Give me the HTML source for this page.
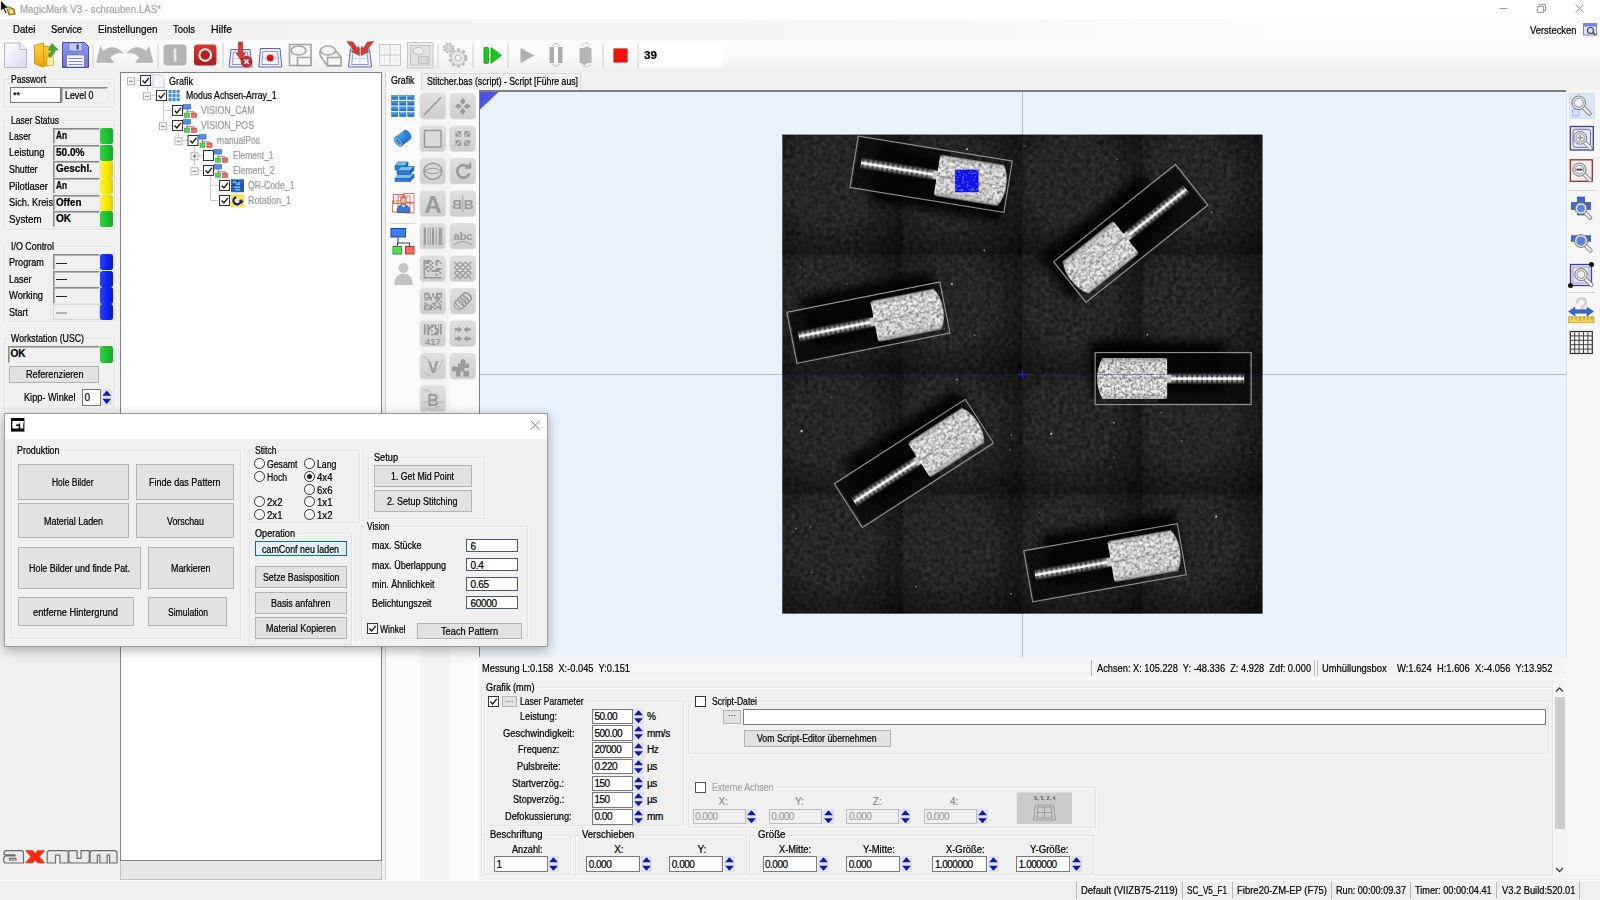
<!DOCTYPE html>
<html><head><meta charset="utf-8"><title>MagicMark V3</title>
<style>
html,body{margin:0;padding:0}
body{width:1600px;height:900px;overflow:hidden;background:#f0f0f0;font-family:"Liberation Sans",sans-serif;font-size:10.5px;color:#000;position:relative}
.a{position:absolute}
.t{position:absolute;white-space:pre;line-height:12px;font-size:10px;-webkit-text-stroke:0.22px currentColor}
.g{color:#9a9a9a}
.b{font-weight:bold}
.gb{position:absolute;border:1px solid #e2e2e2;box-shadow:1px 1px 0 #f8f8f8, inset 1px 1px 0 #f8f8f8;box-sizing:border-box}
.btn{position:absolute;box-sizing:border-box;background:#e2e2e2;border:1px solid #b4b4b4}
.inp{position:absolute;box-sizing:border-box;background:#fff;border:1px solid #7a7a7a}
.inpd{position:absolute;box-sizing:border-box;background:#f0f0f0;border:1px solid #bcbcbc}
.vb{position:absolute;box-sizing:border-box;background:#f0f0f0;border:1px solid #8a8a8a;border-right-color:#e8e8e8;border-bottom-color:#e8e8e8;box-shadow:inset 1px 1px 0 #b4b4b4}
.led{position:absolute;border-radius:2.5px}
.sep{position:absolute;width:1px;background:#c8c8c8}
.cb{position:absolute;box-sizing:border-box;width:11px;height:11px;border:1px solid #333;background:#fff}
.rd{position:absolute;box-sizing:border-box;width:11px;height:11px;margin:-0.5px 0 0 -0.5px;border:1px solid #333;border-radius:50%;background:#fff}
.sp{position:absolute;width:11px;height:16px;background:#dfe6f3}
</style></head>
<body>
<!-- ===== title bar ===== -->
<div class="a" id="titlebar" style="left:0;top:0;width:1600px;height:19px;background:#fff"></div>
<!-- ===== menu + toolbar bg ===== -->
<div class="a" id="menubar" style="left:0;top:19px;width:1600px;height:21px;background:linear-gradient(90deg,#f1f1f1,#f5f5f5 55%,#fdfdfd 82%)"></div>
<div class="a" id="toolbar" style="left:0;top:40px;width:1600px;height:32px;background:linear-gradient(#fcfcfc,#f9f9f9 55%,#eeeeee)"></div>


<!-- title content -->
<svg class="a" style="left:0;top:0" width="20" height="19" viewBox="0 0 20 19">
 <path d="M6,6 L14,9 L15,14 L9,15 Z" fill="#d9b43a" stroke="#7a6420" stroke-width="1"></path>
 <path d="M10,9.5 l2.5,1.2 l0.5,2.2 l-2.4,0.3z" fill="#fff6c8"></path>
 <path d="M0.5,0 L0.5,11.5 L3.2,9 L5.2,13.6 L7,12.8 L5,8.4 L8.6,8.2 Z" fill="#111" stroke="#fff" stroke-width="0.8"></path>
</svg>
<span class="t" style="left: 19.5px; top: 3.4px; font-size: 10.5px; line-height: 13px; color: rgb(164, 164, 164); transform-origin: 0px 50%; transform: scaleX(0.926);">MagicMark V3 - schrauben.LAS*</span>
<svg class="a" style="left:1490px;top:0" width="110" height="19" viewBox="1490 0 110 19" fill="none" stroke="#9a9a9a" stroke-width="1">
 <path d="M1499.5,8.5 h8"></path>
 <path d="M1537.5,6.5 h6 v6 h-6 z M1539.5,6.5 v-2 h6 v6 h-2"></path>
 <path d="M1575.5,4.5 l8,8 M1583.5,4.5 l-8,8"></path>
</svg>
<!-- menu -->
<span class="t" style="left: 12.5px; top: 23.1px; font-size: 10.8px; line-height: 13px; transform-origin: 0px 50%; transform: scaleX(0.892);">Datei</span>
<span class="t" style="left: 51px; top: 23.1px; font-size: 10.8px; line-height: 13px; transform-origin: 0px 50%; transform: scaleX(0.861);">Service</span>
<span class="t" style="left: 97.5px; top: 23.1px; font-size: 10.8px; line-height: 13px; transform-origin: 0px 50%; transform: scaleX(0.918);">Einstellungen</span>
<span class="t" style="left: 173px; top: 23.1px; font-size: 10.8px; line-height: 13px; transform-origin: 0px 50%; transform: scaleX(0.872);">Tools</span>
<span class="t" style="left: 211px; top: 23.1px; font-size: 10.8px; line-height: 13px; transform-origin: 0px 50%; transform: scaleX(0.972);">Hilfe</span>
<span class="t" style="left: 1530px; top: 23.9px; font-size: 10.8px; line-height: 13px; transform-origin: 0px 50%; transform: scaleX(0.87);">Verstecken</span>
<svg class="a" style="left:1583px;top:23px" width="15" height="13" viewBox="0 0 15 13">
 <rect x="0.5" y="0.5" width="13" height="11.5" fill="#dfe4f4" stroke="#7d86b8"></rect>
 <rect x="1" y="1" width="12" height="2.5" fill="#6d86d8"></rect>
 <circle cx="7.5" cy="7.5" r="3" fill="none" stroke="#445" stroke-width="1.2"></circle>
 <path d="M9.5,9.5 l3,2.5" stroke="#445" stroke-width="1.5"></path>
</svg>
<!-- toolbar icons -->
<svg class="a" style="left:0;top:38px" width="740" height="36" viewBox="0 38 740 36">
 <defs>
  <linearGradient id="gdoc" x1="0" y1="0" x2="1" y2="1"><stop offset="0" stop-color="#ffffff"></stop><stop offset="1" stop-color="#d8daee"></stop></linearGradient>
  <linearGradient id="gfol" x1="0" y1="0" x2="0" y2="1"><stop offset="0" stop-color="#ffd23a"></stop><stop offset="1" stop-color="#f0a010"></stop></linearGradient>
  <linearGradient id="gsav" x1="0" y1="0" x2="0" y2="1"><stop offset="0" stop-color="#8e98ee"></stop><stop offset="1" stop-color="#6a74d8"></stop></linearGradient>
  <linearGradient id="gred" x1="0" y1="0" x2="0" y2="1"><stop offset="0" stop-color="#d8392f"></stop><stop offset="1" stop-color="#a81c18"></stop></linearGradient>
 </defs>
 <!-- new doc -->
 <path d="M4.5,43 h15.5 l6.5,6.5 v18 h-22 z" fill="url(#gdoc)" stroke="#b4b6cc" stroke-width="1"></path>
 <path d="M20,43 v6.5 h6.5" fill="#eef" stroke="#b4b6cc" stroke-width="1"></path>
 <!-- open folder -->
 <path d="M34.5,45.5 l9,-2.5 l0,3 l8,1 v6 l-2,0 l2,11 l-9,3 l-8,-3.5 z" fill="url(#gfol)" stroke="#c8860c" stroke-width="0.8"></path>
 <path d="M43.5,46 v20.5" stroke="#d89a10" stroke-width="1"></path>
 <path d="M47,57 h6.5 v8.5 h-6.5z" fill="#f6e9a0" stroke="#c8a030" stroke-width="0.6"></path>
 <path d="M52,43.5 l6,6.5 h-3.2 c0,3 -1.5,5.5 -5,7 l-1.5,-2.5 c2.5,-1 3.6,-2.4 3.6,-4.5 h-3.4 z" fill="#3fae3a" stroke="#2a7a28" stroke-width="0.6"></path>
 <!-- save -->
 <path d="M62.5,42.5 h22 l4,4 v21 h-26 z" fill="url(#gsav)" stroke="#454cae" stroke-width="1"></path>
 <rect x="69" y="43" width="13" height="8" fill="#c9cdf4" stroke="#5860c0" stroke-width="0.6"></rect>
 <rect x="76.5" y="44.5" width="2.2" height="5" fill="#3c4088"></rect>
 <rect x="66.5" y="55" width="18" height="12" fill="#f4f5ff" stroke="#5860c0" stroke-width="0.6"></rect>
 <path d="M68.5,58.5 h14 M68.5,61.5 h14 M68.5,64.5 h14" stroke="#8088d0" stroke-width="1"></path>
 <rect x="92.5" y="43" width="1" height="25" fill="#d0d0d0"></rect>
 <!-- undo / redo -->
 <path d="M100.500,46.500 L96.500,62.500 L114,62.500 L110,57.500 Q115.500,51.500 122.800,53 Q113,43 103.200,51.200 Z" fill="#b7b7b7" stroke="#b0b0b0" stroke-width="0.600" stroke-linejoin="round"></path>
 <path d="M149,46.500 L153,62.500 L135.500,62.500 L139.500,57.500 Q134,51.500 126.700,53 Q136.500,43 146.300,51.200 Z" fill="#b7b7b7" stroke="#b0b0b0" stroke-width="0.600" stroke-linejoin="round"></path>
 <rect x="157.500" y="43" width="1" height="25" fill="#d0d0d0"></rect>
 <!-- gray I -->
 <rect x="163.500" y="44.500" width="23" height="21" rx="3.500" fill="#b4b4b4"></rect>
 <rect x="173.800" y="48.500" width="2.600" height="13" fill="#ececec"></rect>
 <!-- red O -->
 <rect x="194" y="44.500" width="22.500" height="21" rx="3.500" fill="url(#gred)"></rect>
 <circle cx="205.200" cy="55" r="5.800" fill="#b82220" stroke="#fff" stroke-width="2"></circle>
 <rect x="222.500" y="43" width="1" height="25" fill="#d0d0d0"></rect>
 <!-- mark w/ arrow + x -->
 <path d="M231,49.500 h19 l2,17.500 h-23 z" fill="#eef0fb" stroke="#5a62b8" stroke-width="1"></path>
 <path d="M233.500,52 h14 l1.300,12.500 h-16.600 z" fill="#f8f9ff" stroke="#7a82cc" stroke-width="0.8"></path>
 <path d="M232.500,58.500 h16" stroke="#e0a0a0" stroke-width="0.6"></path>
 <path d="M238.500,42 h4 v11 h3 l-4.500,7 l-5,-7 h2.500 z" fill="#d83a34" stroke="#a02020" stroke-width="0.6"></path>
 <circle cx="246.500" cy="61.500" r="5.500" fill="#cc2a26" stroke="#8a1a18" stroke-width="0.6"></circle>
 <path d="M244.300,59.300 l4.400,4.400 M248.700,59.300 l-4.400,4.400" stroke="#fff" stroke-width="1.600"></path>
 <!-- red dot -->
 <path d="M260.500,48.500 h19.500 l1.800,18.500 h-23 z" fill="#eef0fb" stroke="#5a62b8" stroke-width="1"></path>
 <path d="M263,51.500 h14.500 l1.300,13 h-17 z" fill="#f8f9ff" stroke="#7a82cc" stroke-width="0.8"></path>
 <path d="M261.500,58 h17.500" stroke="#e08080" stroke-width="0.6"></path>
 <circle cx="270.200" cy="58" r="3.400" fill="#e8100c"></circle>
 <!-- ellipse/rect grey -->
 <g fill="#f6f6f6" stroke="#a6a6a6" stroke-width="1.600">
 <rect x="289.500" y="44.500" width="21.500" height="21"></rect>
 <ellipse cx="298.500" cy="50.500" rx="7.500" ry="4.500"></ellipse>
 <rect x="297.500" y="57.500" width="13.500" height="8"></rect>
 <!-- 3d -->
 <path d="M327,47 h5 l9,10 v9 h-13.500 l-7,-10 c-2,-5 1,-9 6.500,-9 z"></path>
 <ellipse cx="328" cy="50.500" rx="7.500" ry="4.500"></ellipse>
 <rect x="327.500" y="57.500" width="13.500" height="8"></rect>
 </g>
 <!-- red V arrows -->
 <path d="M350.500,49 h19 l2,18 h-23 z" fill="#eef0fb" stroke="#5a62b8" stroke-width="1"></path>
 <path d="M353,52 h14 l1.300,12.500 h-16.600 z" fill="#f8f9ff" stroke="#7a82cc" stroke-width="0.8"></path>
 <path d="M360,52 v12.500 M352,58.500 h16" stroke="#b8bce0" stroke-width="0.6"></path>
 <path d="M347,41.500 l6,0.500 l4,6 l2,-1.500 l0.500,9 l-8,-4 l2,-1.500 z" fill="#d83a34" stroke="#a02020" stroke-width="0.5"></path>
 <path d="M373.500,41.500 l-6,0.500 l-4,6 l-2,-1.500 l-0.500,9 l8,-4 l-2,-1.500 z" fill="#d83a34" stroke="#a02020" stroke-width="0.5"></path>
 <!-- grid light -->
 <g fill="#f7f7f7" stroke="#c6c6c6" stroke-width="1">
 <rect x="379.500" y="44.500" width="21" height="21"></rect>
 <path d="M390,44.500 v21 M379.500,55 h21"></path>
 </g>
 <path d="M384.700,44.500 v21 M395.300,44.500 v21 M379.500,49.700 h21 M379.500,60.300 h21" stroke="#e2e2e2" stroke-width="0.6"></path>
 <!-- gray box w/ ellipse -->
 <rect x="407.500" y="42.500" width="25.500" height="25.500" fill="#e9e9e9" stroke="#c4c4c4"></rect>
 <rect x="410.500" y="45.500" width="19.500" height="19.500" fill="#e0e0e0" stroke="#c4c4c4"></rect>
 <ellipse cx="418.500" cy="51" rx="5.500" ry="3.500" fill="#ececec" stroke="#c0c0c0"></ellipse>
 <rect x="418.500" y="56.500" width="10" height="7" fill="#d4d4d4" stroke="#c0c0c0"></rect>
 <rect x="437.500" y="43" width="1" height="25" fill="#d0d0d0"></rect>
 <!-- gears -->
 <g fill="#e6e6e6" stroke="#bdbdbd" stroke-width="1">
 <circle cx="448.500" cy="48" r="4.300" stroke-width="2.600" stroke-dasharray="2.200 1.200" fill="none"></circle>
 <circle cx="448.500" cy="48" r="3.400"></circle>
 <circle cx="448.500" cy="48" r="1.300" fill="#fafafa"></circle>
 <circle cx="458" cy="58" r="8" stroke-width="3" stroke-dasharray="3.200 2" fill="none"></circle>
 <circle cx="458" cy="58" r="7"></circle>
 <circle cx="458" cy="58" r="2.800" fill="#fafafa"></circle>
 </g>
 <rect x="472.500" y="43" width="1" height="25" fill="#d0d0d0"></rect>
 <!-- green play -->
 <rect x="484" y="47.500" width="4.600" height="15.800" rx="0.800" fill="#19c81c" stroke="#0c8a10" stroke-width="0.800"></rect>
 <path d="M491,47.500 l10.300,7.900 l-10.300,7.900 z" fill="#19c81c" stroke="#0c8a10" stroke-width="0.800" stroke-linejoin="round"></path>
 <rect x="507.500" y="43" width="1" height="25" fill="#d0d0d0"></rect>
 <!-- gray play -->
 <path d="M520.500,48 l14,7.500 l-14,7.500 z" fill="#b0b0b0"></path>
 <!-- pause -->
 <rect x="549.500" y="47" width="4.500" height="16" fill="#acacac"></rect>
 <rect x="558" y="47" width="4.500" height="16" fill="#acacac"></rect>
 <path d="M552,46 l4,-3 l4,3 M552,64 l4,2.500 l4,-2.500" fill="none" stroke="#d4d4d4" stroke-width="1.500"></path>
 <!-- step -->
 <path d="M579.500,48 h4.500 l3,-2 l3,2 h1.500 v15 h-4 l-3,2.500 l-3,-2.500 h-2 z" fill="#b4b4b4"></path>
 <path d="M581,45.500 l5,-3 l5,3 M582,65 l4,2 l5,-2" fill="none" stroke="#d8d8d8" stroke-width="1.400"></path>
 <rect x="602.500" y="43" width="1" height="25" fill="#d0d0d0"></rect>
 <!-- stop -->
 <rect x="613.800" y="48.800" width="13.400" height="13.400" fill="#f5120c" stroke="#c02018" stroke-width="0.600"></rect>
 <rect x="637.500" y="43" width="1" height="25" fill="#d0d0d0"></rect>
 <rect x="640" y="43" width="83" height="24" fill="#fff"></rect>
</svg>
<span class="t b" style="left: 643.5px; top: 48.6px; font-size: 11.5px; line-height: 13px; transform-origin: 0px 50%; transform: scaleX(1.016);">39</span>

<!-- ===== left panel ===== -->
<div class="a" id="leftpanel" style="left:0;top:72px;width:120px;height:808px;background:#f0f0f0"></div>

<div class="gb" style="left:4px;top:79px;width:111px;height:29px"></div>
<span class="t" style="left: 9px; top: 74px; background: rgb(240, 240, 240); padding: 0px 2px; transform-origin: 2px 50%; transform: scaleX(0.851);">Passwort</span>
<div class="inp" style="left:10px;top:87px;width:51px;height:16px"></div><span class="t" style="left:13px;top:89.0px;font-size:9px">**</span>
<div class="vb" style="left:61px;top:87px;width:47px;height:16px"></div><span class="t" style="left: 64.5px; top: 90px; transform-origin: 0px 50%; transform: scaleX(0.884);">Level 0</span>
<div class="gb" style="left:4px;top:120px;width:111px;height:110px"></div>
<span class="t" style="left: 9px; top: 115px; background: rgb(240, 240, 240); padding: 0px 2px; transform-origin: 2px 50%; transform: scaleX(0.855);">Laser Status</span>
<span class="t" style="left: 9px; top: 130.9px; transform-origin: 0px 50%; transform: scaleX(0.879);">Laser</span>
<div class="vb" style="left:53px;top:128.1px;width:47px;height:16.4px"></div>
<span class="t b" style="left: 56px; top: 130.1px; transform-origin: 0px 50%; transform: scaleX(0.824);">An</span>
<div class="led" style="left:100px;top:128.1px;width:13px;height:16.4px;background:linear-gradient(90deg,#34cc44,#1fc030 50%,#15a826)"></div>
<span class="t" style="left: 9px; top: 147.4px; transform-origin: 0px 50%; transform: scaleX(0.939);">Leistung</span>
<div class="vb" style="left:53px;top:144.6px;width:47px;height:16.4px"></div>
<span class="t b" style="left: 56px; top: 146.6px; transform-origin: 0px 50%; transform: scaleX(1.005);">50.0%</span>
<div class="led" style="left:100px;top:144.6px;width:13px;height:16.4px;background:linear-gradient(90deg,#34cc44,#1fc030 50%,#15a826)"></div>
<span class="t" style="left: 9px; top: 164.1px; transform-origin: 0px 50%; transform: scaleX(0.884);">Shutter</span>
<div class="vb" style="left:53px;top:161.3px;width:47px;height:16.4px"></div>
<span class="t b" style="left: 56px; top: 163.3px; transform-origin: 0px 50%; transform: scaleX(0.996);">Geschl.</span>
<div class="led" style="left:100px;top:161.3px;width:13px;height:16.4px;background:linear-gradient(90deg,#fff24a,#f8e800 50%,#e2d000)"></div>
<span class="t" style="left: 9px; top: 180.7px; transform-origin: 0px 50%; transform: scaleX(0.948);">Pilotlaser</span>
<div class="vb" style="left:53px;top:177.9px;width:47px;height:16.4px"></div>
<span class="t b" style="left: 56px; top: 179.9px; transform-origin: 0px 50%; transform: scaleX(0.824);">An</span>
<div class="led" style="left:100px;top:177.9px;width:13px;height:16.4px;background:linear-gradient(90deg,#fff24a,#f8e800 50%,#e2d000)"></div>
<span class="t" style="left: 9px; top: 197.4px; transform-origin: 0px 50%; transform: scaleX(0.921);">Sich. Kreis</span>
<div class="vb" style="left:53px;top:194.6px;width:47px;height:16.4px"></div>
<span class="t b" style="left: 56px; top: 196.6px; transform-origin: 0px 50%; transform: scaleX(0.977);">Offen</span>
<div class="led" style="left:100px;top:194.6px;width:13px;height:16.4px;background:linear-gradient(90deg,#fff24a,#f8e800 50%,#e2d000)"></div>
<span class="t" style="left: 9px; top: 213.9px; transform-origin: 0px 50%; transform: scaleX(0.975);">System</span>
<div class="vb" style="left:53px;top:211.1px;width:47px;height:16.4px"></div>
<span class="t b" style="left: 56px; top: 213.1px; transform-origin: 0px 50%; transform: scaleX(1);">OK</span>
<div class="led" style="left:100px;top:211.1px;width:13px;height:16.4px;background:linear-gradient(90deg,#34cc44,#1fc030 50%,#15a826)"></div>
<div class="gb" style="left:4px;top:246px;width:111px;height:76px"></div>
<span class="t" style="left: 9px; top: 240.7px; background: rgb(240, 240, 240); padding: 0px 2px; transform-origin: 2px 50%; transform: scaleX(0.889);">I/O Control</span>
<span class="t" style="left: 9px; top: 257.2px; transform-origin: 0px 50%; transform: scaleX(0.912);">Program</span>
<div class="vb" style="left:53px;top:254.1px;width:47px;height:16.4px"></div>
<div class="a" style="left:56px;top:262.5px;width:11px;height:1.3px;background:#222"></div>
<div class="led" style="left:100px;top:254.1px;width:13px;height:16.4px;background:linear-gradient(90deg,#2c44ff,#1226ee 50%,#0a18cc)"></div>
<span class="t" style="left: 9px; top: 273.7px; transform-origin: 0px 50%; transform: scaleX(0.899);">Laser</span>
<div class="vb" style="left:53px;top:270.6px;width:47px;height:16.4px"></div>
<div class="a" style="left:56px;top:279.0px;width:11px;height:1.3px;background:#222"></div>
<div class="led" style="left:100px;top:270.6px;width:13px;height:16.4px;background:linear-gradient(90deg,#2c44ff,#1226ee 50%,#0a18cc)"></div>
<span class="t" style="left: 9px; top: 290.4px; transform-origin: 0px 50%; transform: scaleX(0.932);">Working</span>
<div class="vb" style="left:53px;top:287.3px;width:47px;height:16.4px"></div>
<div class="a" style="left:56px;top:295.7px;width:11px;height:1.3px;background:#222"></div>
<div class="led" style="left:100px;top:287.3px;width:13px;height:16.4px;background:linear-gradient(90deg,#2c44ff,#1226ee 50%,#0a18cc)"></div>
<span class="t" style="left: 9px; top: 307px; transform-origin: 0px 50%; transform: scaleX(0.899);">Start</span>
<div class="a" style="left:53px;top:303.9px;width:47px;height:16.4px;border:1px solid #d6d6d6;box-sizing:border-box"></div>
<div class="a" style="left:56px;top:312.3px;width:11px;height:1.3px;background:#b0b0b0"></div>
<div class="led" style="left:100px;top:303.9px;width:13px;height:16.4px;background:linear-gradient(90deg,#2c44ff,#1226ee 50%,#0a18cc)"></div>
<div class="gb" style="left:4px;top:338px;width:111px;height:72px"></div>
<span class="t" style="left: 9px; top: 333.4px; background: rgb(240, 240, 240); padding: 0px 2px; transform-origin: 2px 50%; transform: scaleX(0.878);">Workstation (USC)</span>
<div class="vb" style="left:8px;top:346px;width:92px;height:16.5px"></div><span class="t b" style="left: 10.5px; top: 348.2px; transform-origin: 0px 50%; transform: scaleX(1);">OK</span>
<div class="led" style="left:100px;top:346px;width:13px;height:16.5px;background:linear-gradient(90deg,#34cc44,#1fc030 50%,#15a826)"></div>
<div class="btn" style="left:9px;top:366px;width:90px;height:17px"></div><span class="t" style="left: 25.5px; top: 369.2px; transform-origin: 0px 50%; transform: scaleX(0.915);">Referenzieren</span>
<span class="t" style="left: 23.5px; top: 391.7px; transform-origin: 0px 50%; transform: scaleX(0.917);">Kipp- Winkel</span>
<div class="inp" style="left:82px;top:389px;width:19px;height:16.5px"></div><span class="t" style="left:84.5px;top:392.2px">0</span>
<svg class="a" style="left:101px;top:389px" width="11.500" height="16.500" viewBox="0 0 11.500 16.500"><rect width="11.500" height="16.500" fill="#dde3f0"></rect><path d="M5.750,1.500 l4.400,5.200 h-8.800z M5.750,15 l4.400,-5.200 h-8.800z" fill="#1414b4"></path></svg>
<svg class="a" style="left:0;top:845px" width="120" height="22" viewBox="0 845 120 22">
 <g fill="#e9e9e9" stroke="#6c6c6c" stroke-width="1.200" stroke-linejoin="round">
 <path d="M6.500,850.600 h14.500 q2.500,0 2.500,2.500 v9.900 h-17 q-2.800,0 -2.800,-2.800 v-1.400 q0,-2.800 2.800,-2.800 h8.500 v-1.200 h-11 v-1.700 q0,-2.500 2.500,-2.500 z M9.500,858.300 v1.700 h6.500 v-1.700 z" fill-rule="evenodd"></path>
 <path d="M47.200,863 v-9.900 q0,-2.500 2.500,-2.500 h16 q2.500,0 2.500,2.500 v9.900 h-8.300 v-7.800 h-4.400 v7.800 z"></path>
 <path d="M68.800,850.600 v9.900 q0,2.500 2.500,2.500 h15.500 q2.500,0 2.500,-2.500 v-9.900 h-8.300 v7.800 h-3.900 v-7.800 z"></path>
 <path d="M90,863 v-9.900 q0,-2.500 2.500,-2.500 h22 q2.500,0 2.500,2.500 v9.900 h-7.400 v-7.800 h-2.400 v7.800 h-7.400 v-7.800 h-2.400 v7.800 z"></path>
 </g>
 <path d="M25,850.300 h7.500 l2.600,2.800 l2.600,-2.800 h7.500 l-5.600,6.400 l5.600,6.500 h-7.500 l-2.600,-2.900 l-2.600,2.900 h-7.500 l5.600,-6.500 z" fill="#ff2a08"></path>
</svg>
<!-- ===== tree ===== -->
<div class="a" id="tree" style="left:120px;top:72px;width:262px;height:789px;background:#fff;border:1px solid #828282;box-sizing:border-box"></div>
<div class="a" style="left:120px;top:861px;width:262px;height:19px;background:#e6e6e6;border:1px solid #c0c0c0;border-top:none;box-sizing:border-box"></div>

<svg class="a" style="left:121px;top:73px" width="260" height="140" viewBox="121 73 260 140">
<g stroke="#cdcdcd" stroke-width="1" fill="none">
<path d="M135.5,80.5 h4 M147.500,85 v6 M151.500,95.500 h4 M163.500,100 v21 M163.500,110.500 h8 M167.500,125.500 h4 M178.500,130 v6 M182.500,140.500 h5 M194.500,145 v21 M198.500,155.500 h4 M198.500,170.500 h4 M210.500,175 v25.500 M210.500,185.500 h8 M210.500,200.500 h8"></path>
</g>
<rect x="127.5" y="77.75" width="7" height="7" fill="#fff" stroke="#b4b4b4" stroke-width="1"></rect>
<path d="M129.0,81.25 h4" stroke="#777" stroke-width="1"></path>
<rect x="140.5" y="75.50" width="10" height="10" fill="#fff" stroke="#333" stroke-width="1"></rect>
<path d="M142.6,80.55 l2.3,2.4 l4,-5" fill="none" stroke="#111" stroke-width="1.3"></path>
<path d="M153,74.75 h7.500 l3.500,3.500 v9.500 h-11 z" fill="#f4f4fb" stroke="#b8bacc" stroke-width="0.8"></path>
<rect x="143.5" y="92.75" width="7" height="7" fill="#fff" stroke="#b4b4b4" stroke-width="1"></rect>
<path d="M145.0,96.25 h4" stroke="#777" stroke-width="1"></path>
<rect x="156.5" y="90.50" width="10" height="10" fill="#fff" stroke="#333" stroke-width="1"></rect>
<path d="M158.6,95.55 l2.3,2.4 l4,-5" fill="none" stroke="#111" stroke-width="1.3"></path>
<rect x="168.5" y="90.05" width="3.2" height="3.2" fill="#3f8fe0"></rect>
<rect x="172.5" y="90.05" width="3.2" height="3.2" fill="#3f8fe0"></rect>
<rect x="176.5" y="90.05" width="3.2" height="3.2" fill="#3f8fe0"></rect>
<rect x="168.5" y="94.05" width="3.2" height="3.2" fill="#3f8fe0"></rect>
<rect x="172.5" y="94.05" width="3.2" height="3.2" fill="#3f8fe0"></rect>
<rect x="176.5" y="94.05" width="3.2" height="3.2" fill="#3f8fe0"></rect>
<rect x="168.5" y="98.05" width="3.2" height="3.2" fill="#3f8fe0"></rect>
<rect x="172.5" y="98.05" width="3.2" height="3.2" fill="#3f8fe0"></rect>
<rect x="176.5" y="98.05" width="3.2" height="3.2" fill="#3f8fe0"></rect>
<rect x="172.5" y="105.50" width="10" height="10" fill="#fff" stroke="#333" stroke-width="1"></rect>
<path d="M174.6,110.55 l2.3,2.4 l4,-5" fill="none" stroke="#111" stroke-width="1.3"></path>
<rect x="183.5" y="104.55" width="7" height="4.5" fill="#4f8ff0" stroke="#2a5ac0" stroke-width="0.6"></rect>
<path d="M187.0,109.25 v2.5 M187.0,113.25 v-1.500 h7 v1.500" fill="none" stroke="#555" stroke-width="0.7"></path>
<rect x="184.5" y="113.05" width="5" height="4.2" fill="#5fd060" stroke="#2a9a30" stroke-width="0.6"></rect>
<rect x="191.5" y="113.05" width="5" height="4.2" fill="#f07068" stroke="#c03028" stroke-width="0.6"></rect>
<rect x="159.5" y="122.75" width="7" height="7" fill="#fff" stroke="#b4b4b4" stroke-width="1"></rect>
<path d="M161.0,126.25 h4" stroke="#777" stroke-width="1"></path>
<rect x="172.5" y="120.50" width="10" height="10" fill="#fff" stroke="#333" stroke-width="1"></rect>
<path d="M174.6,125.55 l2.3,2.4 l4,-5" fill="none" stroke="#111" stroke-width="1.3"></path>
<rect x="183.5" y="119.55" width="7" height="4.5" fill="#4f8ff0" stroke="#2a5ac0" stroke-width="0.6"></rect>
<path d="M187.0,124.25 v2.5 M187.0,128.25 v-1.500 h7 v1.500" fill="none" stroke="#555" stroke-width="0.7"></path>
<rect x="184.5" y="128.05" width="5" height="4.2" fill="#5fd060" stroke="#2a9a30" stroke-width="0.6"></rect>
<rect x="191.5" y="128.05" width="5" height="4.2" fill="#f07068" stroke="#c03028" stroke-width="0.6"></rect>
<rect x="175.0" y="137.75" width="7" height="7" fill="#fff" stroke="#b4b4b4" stroke-width="1"></rect>
<path d="M176.5,141.25 h4" stroke="#777" stroke-width="1"></path>
<rect x="188.0" y="135.50" width="10" height="10" fill="#fff" stroke="#333" stroke-width="1"></rect>
<path d="M190.1,140.55 l2.3,2.4 l4,-5" fill="none" stroke="#111" stroke-width="1.3"></path>
<rect x="199.0" y="134.55" width="7" height="4.5" fill="#4f8ff0" stroke="#2a5ac0" stroke-width="0.6"></rect>
<path d="M202.5,139.25 v2.5 M202.5,143.25 v-1.500 h7 v1.500" fill="none" stroke="#555" stroke-width="0.7"></path>
<rect x="200.0" y="143.05" width="5" height="4.2" fill="#5fd060" stroke="#2a9a30" stroke-width="0.6"></rect>
<rect x="207.0" y="143.05" width="5" height="4.2" fill="#f07068" stroke="#c03028" stroke-width="0.6"></rect>
<rect x="191.0" y="152.75" width="7" height="7" fill="#fff" stroke="#b4b4b4" stroke-width="1"></rect>
<path d="M192.5,156.25 h4" stroke="#777" stroke-width="1"></path>
<path d="M194.5,154.25 v4" stroke="#777" stroke-width="1"></path>
<rect x="203.5" y="150.50" width="10" height="10" fill="#fff" stroke="#333" stroke-width="1"></rect>
<rect x="214.5" y="149.55" width="7" height="4.5" fill="#4f8ff0" stroke="#2a5ac0" stroke-width="0.6"></rect>
<path d="M218.0,154.25 v2.5 M218.0,158.25 v-1.500 h7 v1.500" fill="none" stroke="#555" stroke-width="0.7"></path>
<rect x="215.5" y="158.05" width="5" height="4.2" fill="#5fd060" stroke="#2a9a30" stroke-width="0.6"></rect>
<rect x="222.5" y="158.05" width="5" height="4.2" fill="#f07068" stroke="#c03028" stroke-width="0.6"></rect>
<rect x="191.0" y="167.75" width="7" height="7" fill="#fff" stroke="#b4b4b4" stroke-width="1"></rect>
<path d="M192.5,171.25 h4" stroke="#777" stroke-width="1"></path>
<rect x="203.5" y="165.50" width="10" height="10" fill="#fff" stroke="#333" stroke-width="1"></rect>
<path d="M205.6,170.55 l2.3,2.4 l4,-5" fill="none" stroke="#111" stroke-width="1.3"></path>
<rect x="214.5" y="164.55" width="7" height="4.5" fill="#4f8ff0" stroke="#2a5ac0" stroke-width="0.6"></rect>
<path d="M218.0,169.25 v2.5 M218.0,173.25 v-1.500 h7 v1.500" fill="none" stroke="#555" stroke-width="0.7"></path>
<rect x="215.5" y="173.05" width="5" height="4.2" fill="#5fd060" stroke="#2a9a30" stroke-width="0.6"></rect>
<rect x="222.5" y="173.05" width="5" height="4.2" fill="#f07068" stroke="#c03028" stroke-width="0.6"></rect>
<rect x="219.5" y="180.50" width="10" height="10" fill="#fff" stroke="#333" stroke-width="1"></rect>
<path d="M221.6,185.55 l2.3,2.4 l4,-5" fill="none" stroke="#111" stroke-width="1.3"></path>
<rect x="231.0" y="179.25" width="13" height="13" fill="#2c60b8"></rect>
<path d="M233.0,182.25 h4 v2 h3 M234.0,187.25 h6 M239.0,181.75 v3 M235.0,189.75 h5" stroke="#6fc0f0" stroke-width="1.3" fill="none"></path>
<path d="M232.5,185.25 h3 M240.0,185.75 h3 M237.0,180.75 v2" stroke="#1a3a80" stroke-width="1.2" fill="none"></path>
<rect x="219.5" y="195.50" width="10" height="10" fill="#fff" stroke="#333" stroke-width="1"></rect>
<path d="M221.6,200.55 l2.3,2.4 l4,-5" fill="none" stroke="#111" stroke-width="1.3"></path>
<rect x="231.0" y="194.25" width="13" height="13" fill="#ffe23a"></rect>
<circle cx="237.0" cy="200.75" r="3.6" fill="#ffe9a0" stroke="#1c1c8c" stroke-width="2.2" stroke-dasharray="17 6" transform="rotate(-20 237.0 200.75)"></circle>
<path d="M239.5,200.25 l4.500,0.500 l-3,3.500 z" fill="#1c1c8c"></path>
</svg>
<span class="t" style="left: 169px; top: 75.6px; transform-origin: 0px 50%; transform: scaleX(0.9);">Grafik</span>
<span class="t" style="left: 185.5px; top: 90.4px; transform-origin: 0px 50%; transform: scaleX(0.871);">Modus Achsen-Array_1</span>
<span class="t g" style="left: 201px; top: 105.4px; transform-origin: 0px 50%; transform: scaleX(0.867);">VISION_CAM</span>
<span class="t g" style="left: 201px; top: 120.4px; transform-origin: 0px 50%; transform: scaleX(0.875);">VISION_POS</span>
<span class="t g" style="left: 216.5px; top: 135.4px; transform-origin: 0px 50%; transform: scaleX(0.859);">manualPos</span>
<span class="t g" style="left: 233px; top: 150.4px; transform-origin: 0px 50%; transform: scaleX(0.847);">Element_1</span>
<span class="t g" style="left: 233px; top: 165.4px; transform-origin: 0px 50%; transform: scaleX(0.868);">Element_2</span>
<span class="t g" style="left: 248px; top: 180.4px; transform-origin: 0px 50%; transform: scaleX(0.871);">QR-Code_1</span>
<span class="t g" style="left: 248px; top: 195.4px; transform-origin: 0px 50%; transform: scaleX(0.889);">Rotation_1</span>
<div class="a" style="left:385px;top:72px;width:94px;height:808px;background:linear-gradient(90deg,#fcfcfc 0,#fcfcfc 33px,#f3f3f3 36px,#f3f3f3 62px,#f9f9f9 66px,#fbfbfb 100%);border-left:1px solid #d4d4d4;box-sizing:border-box"></div>
<div class="a" style="left:387px;top:90px;width:31px;height:322px;background:#fafafa"></div>
<div class="a" style="left:386px;top:72px;width:33px;height:19px;background:#fafafa"></div>
<span class="t" style="left: 391px; top: 74.7px; transform-origin: 0px 50%; transform: scaleX(0.881);">Grafik</span>
<div class="a" style="left:421px;top:73px;width:160px;height:17px;background:#f1f1f1;border:1px solid #d9d9d9;border-bottom:none;box-sizing:border-box"></div>
<span class="t" style="left: 427px; top: 75.7px; transform-origin: 0px 50%; transform: scaleX(0.871);">Stitcher.bas (script) - Script [Führe aus]</span>
<svg class="a" style="left:386px;top:90px" width="94" height="325" viewBox="386 90 94 325">
<defs><linearGradient id="gbtn" x1="0" y1="0" x2="0" y2="1"><stop offset="0" stop-color="#dfdfdf"></stop><stop offset="1" stop-color="#cecece"></stop></linearGradient><linearGradient id="gblu" x1="0" y1="0" x2="0" y2="1"><stop offset="0" stop-color="#4aa8f0"></stop><stop offset="1" stop-color="#1868c8"></stop></linearGradient></defs>
<rect x="420" y="93.5" width="25.500" height="25.500" rx="3.500" fill="url(#gbtn)" stroke="#dcdcdc" stroke-width="0.800"></rect>
<rect x="450" y="93.5" width="25.500" height="25.500" rx="3.500" fill="url(#gbtn)" stroke="#dcdcdc" stroke-width="0.800"></rect>
<rect x="420" y="126" width="25.500" height="25.500" rx="3.500" fill="url(#gbtn)" stroke="#dcdcdc" stroke-width="0.800"></rect>
<rect x="450" y="126" width="25.500" height="25.500" rx="3.500" fill="url(#gbtn)" stroke="#dcdcdc" stroke-width="0.800"></rect>
<rect x="420" y="158.5" width="25.500" height="25.500" rx="3.500" fill="url(#gbtn)" stroke="#dcdcdc" stroke-width="0.800"></rect>
<rect x="450" y="158.5" width="25.500" height="25.500" rx="3.500" fill="url(#gbtn)" stroke="#dcdcdc" stroke-width="0.800"></rect>
<rect x="420" y="191" width="25.500" height="25.500" rx="3.500" fill="url(#gbtn)" stroke="#dcdcdc" stroke-width="0.800"></rect>
<rect x="450" y="191" width="25.500" height="25.500" rx="3.500" fill="url(#gbtn)" stroke="#dcdcdc" stroke-width="0.800"></rect>
<rect x="420" y="223.5" width="25.500" height="25.500" rx="3.500" fill="url(#gbtn)" stroke="#dcdcdc" stroke-width="0.800"></rect>
<rect x="450" y="223.5" width="25.500" height="25.500" rx="3.500" fill="url(#gbtn)" stroke="#dcdcdc" stroke-width="0.800"></rect>
<rect x="420" y="256" width="25.500" height="25.500" rx="3.500" fill="url(#gbtn)" stroke="#dcdcdc" stroke-width="0.800"></rect>
<rect x="450" y="256" width="25.500" height="25.500" rx="3.500" fill="url(#gbtn)" stroke="#dcdcdc" stroke-width="0.800"></rect>
<rect x="420" y="288.5" width="25.500" height="25.500" rx="3.500" fill="url(#gbtn)" stroke="#dcdcdc" stroke-width="0.800"></rect>
<rect x="450" y="288.5" width="25.500" height="25.500" rx="3.500" fill="url(#gbtn)" stroke="#dcdcdc" stroke-width="0.800"></rect>
<rect x="420" y="321" width="25.500" height="25.500" rx="3.500" fill="url(#gbtn)" stroke="#dcdcdc" stroke-width="0.800"></rect>
<rect x="450" y="321" width="25.500" height="25.500" rx="3.500" fill="url(#gbtn)" stroke="#dcdcdc" stroke-width="0.800"></rect>
<rect x="420" y="353.5" width="25.500" height="25.500" rx="3.500" fill="url(#gbtn)" stroke="#dcdcdc" stroke-width="0.800"></rect>
<rect x="450" y="353.5" width="25.500" height="25.500" rx="3.500" fill="url(#gbtn)" stroke="#dcdcdc" stroke-width="0.800"></rect>
<rect x="420" y="386" width="25.500" height="25.500" rx="3.500" fill="url(#gbtn)" stroke="#dcdcdc" stroke-width="0.800"></rect>
<path d="M424,115 L441,97.500" stroke="#9a9a9a" stroke-width="1.500"></path>
<path d="M462.800,97.800 l2.800,3.600 l-2.800,3.600 l-2.800,-3.600z M462.800,107.800 l2.800,3.600 l-2.800,3.600 l-2.800,-3.600z M454.800,106.300 l3.600,-2.800 l3.600,2.800 l-3.600,2.800z M463.600,106.300 l3.600,-2.800 l3.600,2.800 l-3.600,2.800z" fill="#9a9a9a"></path>
<rect x="424.500" y="130.500" width="16.500" height="16.500" fill="#dadada" stroke="#9a9a9a" stroke-width="1.500"></rect>
<path d="M455.500,131 h5.800 v5.800 h-5.800z M464.300,131 h5.800 v5.800 h-5.800z M455.500,140.200 h5.800 v5.800 h-5.800z M464.300,140.200 h5.800 v5.800 h-5.800z" fill="#9a9a9a"></path><path d="M456,131.500 l4.800,4.800 M464.800,136.300 l4.800,-4.800 M456,145.500 l4.800,-4.800 M464.800,140.700 l4.800,4.800" stroke="#d2d2d2" stroke-width="1.100"></path>
<ellipse cx="432.800" cy="171.200" rx="9" ry="8" fill="#d8d8d8" stroke="#9a9a9a" stroke-width="1.400"></ellipse><path d="M424,171 q9,-5.500 17.500,0 M424,171 q9,5.500 17.500,0" fill="none" stroke="#9a9a9a" stroke-width="1"></path>
<path d="M467.800,166.800 a6.300,6.300 0 1 0 1.600,6.600" fill="none" stroke="#9a9a9a" stroke-width="2.800"></path><path d="M464,168.800 h7.200 v-7.200 z" fill="#9a9a9a"></path>
<text x="432.800" y="213" font-family="Liberation Sans" font-weight="bold" font-size="24" text-anchor="middle" fill="#9a9a9a">A</text>
<g font-family="Liberation Sans" font-weight="bold" font-size="13.500" fill="#9a9a9a"><text x="463.800" y="208.500">B</text><text x="-461.800" y="208.500" transform="scale(-1 1)">B</text></g><path d="M462.800,195 v17.500" stroke="#9a9a9a" stroke-width="0.900"></path>
<path d="M424.800,227.500 v17.500 M433,227.500 v17.500 M439.800,227.500 v17.500" stroke="#9a9a9a" stroke-width="2.200"></path><path d="M428,227.500 v17.500 M430.300,227.500 v17.500 M436.200,227.500 v17.500 M441.800,227.500 v17.500" stroke="#9a9a9a" stroke-width="1"></path>
<text x="462.800" y="239.500" font-family="Liberation Sans" font-weight="bold" font-size="11.500" text-anchor="middle" fill="#9a9a9a" letter-spacing="-0.300">abc</text><path d="M454,245 q9,-7 18,0" stroke="#9a9a9a" stroke-width="1.200" fill="none"></path>
<path d="M425.5,260.0h2v2h-2zM427.5,260.0h2v2h-2zM429.5,260.0h2v2h-2zM435.5,260.0h2v2h-2zM437.5,260.0h2v2h-2zM425.5,262.0h2v2h-2zM427.5,262.0h2v2h-2zM431.5,262.0h2v2h-2zM435.5,262.0h2v2h-2zM439.5,262.0h2v2h-2zM429.5,264.0h2v2h-2zM435.5,264.0h2v2h-2zM425.5,266.0h2v2h-2zM427.5,266.0h2v2h-2zM431.5,266.0h2v2h-2zM425.5,268.0h2v2h-2zM429.5,268.0h2v2h-2zM435.5,268.0h2v2h-2zM437.5,268.0h2v2h-2zM439.5,268.0h2v2h-2zM427.5,270.0h2v2h-2zM431.5,270.0h2v2h-2zM433.5,270.0h2v2h-2zM435.5,270.0h2v2h-2zM437.5,270.0h2v2h-2zM439.5,272.0h2v2h-2zM435.5,274.0h2v2h-2z" fill="#9a9a9a"></path><path d="M424.300,259.500 v18.200 h17.700" stroke="#9a9a9a" stroke-width="1.600" fill="none"></path>
<g stroke="#9a9a9a" stroke-width="1.100" stroke-linecap="square"><path d="M454.500,262 l16.500,16.500 M454.500,267.500 l11,11 M454.500,273 l5.500,5.500 M460,262 l11,11 M465.500,262 l5.500,5.500 M471,262 l-16.500,16.500 M465.500,262 l-11,11 M460,262 l-5.500,5.500 M471,267.500 l-11,11 M471,273 l-5.500,5.500"></path></g>
<path d="M424.5,293.0h1.9v1.9h-1.9zM426.4,293.0h1.9v1.9h-1.9zM432.1,293.0h1.9v1.9h-1.9zM435.9,293.0h1.9v1.9h-1.9zM437.8,293.0h1.9v1.9h-1.9zM439.7,293.0h1.9v1.9h-1.9zM428.3,294.9h1.9v1.9h-1.9zM432.1,294.9h1.9v1.9h-1.9zM435.9,294.9h1.9v1.9h-1.9zM428.3,296.8h1.9v1.9h-1.9zM430.2,296.8h1.9v1.9h-1.9zM434.0,296.8h1.9v1.9h-1.9zM435.9,296.8h1.9v1.9h-1.9zM437.8,296.8h1.9v1.9h-1.9zM424.5,298.7h1.9v1.9h-1.9zM426.4,298.7h1.9v1.9h-1.9zM430.2,298.7h1.9v1.9h-1.9zM435.9,298.7h1.9v1.9h-1.9zM437.8,298.7h1.9v1.9h-1.9zM435.9,300.6h1.9v1.9h-1.9zM439.7,300.6h1.9v1.9h-1.9zM424.5,302.5h1.9v1.9h-1.9zM432.1,302.5h1.9v1.9h-1.9zM434.0,302.5h1.9v1.9h-1.9zM437.8,302.5h1.9v1.9h-1.9zM426.4,304.4h1.9v1.9h-1.9zM430.2,304.4h1.9v1.9h-1.9zM434.0,304.4h1.9v1.9h-1.9zM439.7,304.4h1.9v1.9h-1.9zM424.5,306.3h1.9v1.9h-1.9zM430.2,306.3h1.9v1.9h-1.9zM432.1,306.3h1.9v1.9h-1.9zM435.9,306.3h1.9v1.9h-1.9zM437.8,306.3h1.9v1.9h-1.9zM439.7,306.3h1.9v1.9h-1.9zM424.5,308.2h1.9v1.9h-1.9zM428.3,308.2h1.9v1.9h-1.9zM430.2,308.2h1.9v1.9h-1.9zM434.0,308.2h1.9v1.9h-1.9zM439.7,308.2h1.9v1.9h-1.9z" fill="#9a9a9a"></path><g fill="none" stroke="#9a9a9a" stroke-width="1.200"><rect x="424.800" y="293.300" width="4.400" height="4.400"></rect><rect x="436.800" y="293.300" width="4.400" height="4.400"></rect><rect x="424.800" y="305.300" width="4.400" height="4.400"></rect></g>
<g transform="rotate(-45 462.800 301.200)" fill="none" stroke="#9a9a9a" stroke-width="1.200"><rect x="453" y="296.200" width="19.500" height="10" rx="5" fill="#dadada"></rect><ellipse cx="458.500" cy="301.200" rx="2.600" ry="5"></ellipse><ellipse cx="462" cy="301.200" rx="2.600" ry="5"></ellipse><ellipse cx="465.500" cy="301.200" rx="2.600" ry="5"></ellipse><ellipse cx="469" cy="301.200" rx="2.600" ry="5"></ellipse></g>
<path d="M427.5,324.5h1.8v1.8h-1.8zM431.1,324.5h1.8v1.8h-1.8zM432.9,324.5h1.8v1.8h-1.8zM434.7,324.5h1.8v1.8h-1.8zM427.5,326.3h1.8v1.8h-1.8zM429.3,326.3h1.8v1.8h-1.8zM431.1,326.3h1.8v1.8h-1.8zM434.7,326.3h1.8v1.8h-1.8zM427.5,328.1h1.8v1.8h-1.8zM429.3,328.1h1.8v1.8h-1.8zM434.7,328.1h1.8v1.8h-1.8zM436.5,328.1h1.8v1.8h-1.8zM427.5,329.9h1.8v1.8h-1.8zM431.1,329.9h1.8v1.8h-1.8zM436.5,329.9h1.8v1.8h-1.8zM427.5,331.7h1.8v1.8h-1.8zM434.7,331.7h1.8v1.8h-1.8zM436.5,331.7h1.8v1.8h-1.8zM427.5,333.5h1.8v1.8h-1.8zM431.1,333.5h1.8v1.8h-1.8zM432.9,333.5h1.8v1.8h-1.8zM434.7,333.5h1.8v1.8h-1.8zM436.5,333.5h1.8v1.8h-1.8z" fill="#9a9a9a"></path><path d="M424.800,324 v10.500 M440.800,324 v10.500" stroke="#9a9a9a" stroke-width="1.800"></path><path d="M427.200,324 v10.500 M438.600,324 v10.500" stroke="#9a9a9a" stroke-width="0.800"></path>
<text x="432.800" y="344.800" font-family="Liberation Sans" font-weight="bold" font-size="9.500" text-anchor="middle" fill="#9a9a9a">417</text>
<path d="M462,329.500 l-3.800,-3.200 v2 h-3.400 v2.400 h3.400 v2z M463.600,329.500 l3.800,-3.200 v2 h3.400 v2.400 h-3.400 v2z M462,338.800 l-3.800,-3.200 v2 h-3.400 v2.400 h3.400 v2z M463.600,338.800 l3.800,-3.200 v2 h3.400 v2.400 h-3.400 v2z" fill="#9a9a9a"></path>
<text x="433" y="372.500" font-family="Liberation Sans" font-weight="bold" font-size="16" text-anchor="middle" fill="#9a9a9a">V</text><path d="M423,357 q5,0 7,6 M443,360 q-3,8 -9,13 M424,372 q3,3 6,4" stroke="#b4b4b4" stroke-width="0.900" fill="none"></path>
<path d="M458,363.500 h3 a2.600,2.600 0 1 1 4,0 h4 v4.500 h-4.500 v3 h4.500 v5.500 h-5.500 v-5 h-3 v5 h-4.500 v-5.500 a2.600,2.600 0 1 1 0,-4 h2 z" fill="#9a9a9a"></path>
<text x="433" y="405.500" font-family="Liberation Sans" font-weight="bold" font-size="16" text-anchor="middle" fill="#9a9a9a">B</text><path d="M423,390 q6,-1 9,4 M422,402 h22 M426,408 q6,3 14,-2" stroke="#b4b4b4" stroke-width="0.900" fill="none"></path>
<rect x="391.5" y="95.5" width="6.400" height="4" fill="url(#gblu)" stroke="#1458a8" stroke-width="0.400"></rect>
<rect x="399.6" y="95.5" width="6.400" height="4" fill="url(#gblu)" stroke="#1458a8" stroke-width="0.400"></rect>
<rect x="407.7" y="95.5" width="6.400" height="4" fill="url(#gblu)" stroke="#1458a8" stroke-width="0.400"></rect>
<rect x="391.5" y="101.2" width="6.400" height="4" fill="url(#gblu)" stroke="#1458a8" stroke-width="0.400"></rect>
<rect x="399.6" y="101.2" width="6.400" height="4" fill="url(#gblu)" stroke="#1458a8" stroke-width="0.400"></rect>
<rect x="407.7" y="101.2" width="6.400" height="4" fill="url(#gblu)" stroke="#1458a8" stroke-width="0.400"></rect>
<rect x="391.5" y="106.9" width="6.400" height="4" fill="url(#gblu)" stroke="#1458a8" stroke-width="0.400"></rect>
<rect x="399.6" y="106.9" width="6.400" height="4" fill="url(#gblu)" stroke="#1458a8" stroke-width="0.400"></rect>
<rect x="407.7" y="106.9" width="6.400" height="4" fill="url(#gblu)" stroke="#1458a8" stroke-width="0.400"></rect>
<rect x="391.5" y="112.6" width="6.400" height="4" fill="url(#gblu)" stroke="#1458a8" stroke-width="0.400"></rect>
<rect x="399.6" y="112.6" width="6.400" height="4" fill="url(#gblu)" stroke="#1458a8" stroke-width="0.400"></rect>
<rect x="407.7" y="112.6" width="6.400" height="4" fill="url(#gblu)" stroke="#1458a8" stroke-width="0.400"></rect>
<g transform="translate(403 138) scale(0.74) translate(-403 -138) rotate(-38 403 138)"><rect x="395" y="130.500" width="16" height="15" fill="url(#gblu)"></rect><ellipse cx="411" cy="138" rx="3.500" ry="7.500" fill="#2c7cd8"></ellipse><ellipse cx="395" cy="138" rx="4" ry="7.500" fill="#7ac0f4" stroke="#1458a8" stroke-width="0.800"></ellipse><ellipse cx="395" cy="138" rx="2" ry="4" fill="#3f90e0" stroke="#1458a8" stroke-width="0.600"></ellipse></g>
<g stroke="#1458a8" stroke-width="0.600"><path d="M398,162 h10 l-3,4 h-10z" fill="#7ac0f4"></path><path d="M395,166 h10 v4 h-10z" fill="#2c7cd8"></path><path d="M405,166 l3,-4 v4 l-3,4z" fill="#1868c8"></path><path d="M401,166.500 h13 l-4,4.500 h-13z" fill="#7ac0f4"></path><path d="M397,171 h13 v3.500 h-13z" fill="#2c7cd8"></path><path d="M410,171 l4,-4.500 v3.500 l-4,4.500z" fill="#1868c8"></path><path d="M399,174.500 h15 l-4,4 h-15z" fill="#7ac0f4"></path><path d="M395,178.500 h15 v3 h-15z" fill="#2c7cd8"></path><path d="M410,178.500 l4,-4 v3 l-4,4z" fill="#1868c8"></path></g>
<g fill="none" stroke="#e05048" stroke-width="0.800"><rect x="393.500" y="194.500" width="10" height="9"></rect><rect x="404" y="193.500" width="10" height="9"></rect><rect x="392.500" y="201" width="9" height="11"></rect><rect x="405" y="203" width="9" height="10"></rect><rect x="398" y="196" width="12" height="16"></rect></g>
<circle cx="403.500" cy="200.500" r="3.200" fill="#f0b088" stroke="#804020" stroke-width="0.500"></circle><path d="M400,199 q3.500,-4 7,0 l-1,-2.500 h-5z" fill="#d06020"></path><path d="M397,212.500 q0,-8 6.500,-8 q6.500,0 6.500,8z" fill="#3c78d8" stroke="#1c3c88" stroke-width="0.600"></path><path d="M401.500,205 l2,2.500 l2,-2.500z" fill="#fff"></path>
<path d="M391,223.500 h24" stroke="#d6d6d6" stroke-width="1"></path>
<rect x="391" y="228.500" width="14.500" height="8.500" fill="#3c7cf0" stroke="#1c44b8" stroke-width="1"></rect><path d="M398,237.500 v5.500 M397.500,243 h12 v3.500 M397.500,243 v3.500" fill="none" stroke="#3a3a6a" stroke-width="1.100"></path>
<rect x="393" y="246.500" width="8.500" height="7.500" fill="#58dc58" stroke="#2a9a30" stroke-width="1"></rect><rect x="405.500" y="246.500" width="8.500" height="7.500" fill="#fa6a5c" stroke="#c03028" stroke-width="1"></rect>
<circle cx="403.500" cy="268" r="4.600" fill="#c6c6c6" stroke="#b0b0b0" stroke-width="0.600"></circle><path d="M394.500,284.500 q0.500,-10.500 9,-10.500 q8.500,0 9,10.500z" fill="#c2c2c2" stroke="#b0b0b0" stroke-width="0.600"></path>
</svg>
<!-- ===== canvas ===== -->
<div class="a" id="canvas" style="left:479px;top:90px;width:1087px;height:567px;background:#e9f3fd;border-top:2px solid #7e7e7e;border-left:1px solid #7e7e7e;box-sizing:border-box"></div>

<svg class="a" style="left:480px;top:92px" width="1086" height="565" viewBox="480 92 1086 565">
<defs>
<filter id="fbg" x="0" y="0" width="100%" height="100%"><feTurbulence type="fractalNoise" baseFrequency="0.22" numOctaves="3" seed="7" result="n"></feTurbulence><feColorMatrix in="n" type="matrix" values="0 0 0 0 0  0 0 0 0 0  0 0 0 0 0  1.3 1.3 0 0 -0.85" result="a"></feColorMatrix><feFlood flood-color="#626262"></feFlood><feComposite in2="a" operator="in"></feComposite></filter>
<filter id="fbody" x="0" y="0" width="100%" height="100%"><feTurbulence type="fractalNoise" baseFrequency="0.35" numOctaves="3" seed="11" result="n"></feTurbulence><feColorMatrix in="n" type="matrix" values="0 0 0 0 0  0 0 0 0 0  0 0 0 0 0  1.5 1.5 0 0 -1.2" result="a"></feColorMatrix><feFlood flood-color="#707070"></feFlood><feComposite in2="a" operator="in"></feComposite><feComposite in2="SourceGraphic" operator="in"></feComposite></filter>
<filter id="fblur" x="-20%" y="-20%" width="140%" height="140%"><feGaussianBlur stdDeviation="5"></feGaussianBlur></filter>
<filter id="fblur1" x="-10%" y="-10%" width="120%" height="120%"><feGaussianBlur stdDeviation="0.6"></feGaussianBlur></filter>
<radialGradient id="gvig" cx="0.4" cy="0.4" r="0.85"><stop offset="0.4" stop-color="#000" stop-opacity="0"></stop><stop offset="1" stop-color="#000" stop-opacity="0.7"></stop></radialGradient>
<linearGradient id="gshaft" x1="0" y1="0" x2="0" y2="1"><stop offset="0" stop-color="#1c1c1c"></stop><stop offset="0.3" stop-color="#8a8a8a"></stop><stop offset="0.5" stop-color="#e8e8e8"></stop><stop offset="0.7" stop-color="#8a8a8a"></stop><stop offset="1" stop-color="#1a1a1a"></stop></linearGradient>
<linearGradient id="gbody" x1="0" y1="0" x2="0" y2="1"><stop offset="0" stop-color="#c0c0c0"></stop><stop offset="0.15" stop-color="#f2f2f2"></stop><stop offset="0.85" stop-color="#ececec"></stop><stop offset="1" stop-color="#b0b0b0"></stop></linearGradient>
<g id="screw">
 <rect x="-76" y="-24.500" width="92" height="49" fill="#050505" opacity="0.72"></rect>
 <g filter="url(#fblur1)">
 <rect x="-71" y="-5.500" width="78" height="11" fill="url(#gshaft)"></rect>
 <path d="M-69,-6 v12 M-64,-6 v12 M-59,-6 v12 M-54,-6 v12 M-49,-6 v12 M-44,-6 v12 M-39,-6 v12 M-34,-6 v12 M-29,-6 v12 M-24,-6 v12 M-19,-6 v12 M-14,-6 v12 M-9,-6 v12 M-4,-6 v12" stroke="#1a1a1a" stroke-width="1.600" opacity="0.75"></path>
 <rect x="-71" y="-1.300" width="78" height="2.400" fill="#fff" opacity="0.85"></rect>
 <rect x="2" y="-4" width="6" height="8" fill="#c8c8c8"></rect>
 <path id="bodyp" d="M6,-18 q0,-2.500 2.500,-2.500 h62 q5.500,9 5.500,20.500 q0,11.500 -5.500,20.500 h-62 q-2.500,0 -2.500,-2.500 z" fill="url(#gbody)"></path>
 <use href="#bodyp" filter="url(#fbody)"></use>
 <path d="M6,0.500 h70" stroke="#707070" stroke-width="0.900" opacity="0.6"></path>
 </g>
 <rect x="-78" y="-26" width="156" height="52" fill="none" stroke="#8e8e8e" stroke-width="1.200"></rect>
</g>
</defs>
<path d="M1022.500,92 v565 M480,374.500 h1086" stroke="#b6c0cc" stroke-width="1"></path>
<rect x="782.400" y="134.700" width="480" height="478.800" fill="#1a1a1a"></rect>
<rect x="782.400" y="134.700" width="480" height="478.800" filter="url(#fbg)" opacity="0.36"></rect>
<rect x="782.4" y="134.7" width="120" height="119.700" fill="url(#gvig)"></rect>
<rect x="902.4" y="134.7" width="120" height="119.700" fill="url(#gvig)"></rect>
<rect x="1022.4" y="134.7" width="120" height="119.700" fill="url(#gvig)"></rect>
<rect x="1142.4" y="134.7" width="120" height="119.700" fill="url(#gvig)"></rect>
<rect x="782.4" y="254.4" width="120" height="119.700" fill="url(#gvig)"></rect>
<rect x="902.4" y="254.4" width="120" height="119.700" fill="url(#gvig)"></rect>
<rect x="1022.4" y="254.4" width="120" height="119.700" fill="url(#gvig)"></rect>
<rect x="1142.4" y="254.4" width="120" height="119.700" fill="url(#gvig)"></rect>
<rect x="782.4" y="374.1" width="120" height="119.700" fill="url(#gvig)"></rect>
<rect x="902.4" y="374.1" width="120" height="119.700" fill="url(#gvig)"></rect>
<rect x="1022.4" y="374.1" width="120" height="119.700" fill="url(#gvig)"></rect>
<rect x="1142.4" y="374.1" width="120" height="119.700" fill="url(#gvig)"></rect>
<rect x="782.4" y="493.8" width="120" height="119.700" fill="url(#gvig)"></rect>
<rect x="902.4" y="493.8" width="120" height="119.700" fill="url(#gvig)"></rect>
<rect x="1022.4" y="493.8" width="120" height="119.700" fill="url(#gvig)"></rect>
<rect x="1142.4" y="493.8" width="120" height="119.700" fill="url(#gvig)"></rect>
<circle cx="1010.2" cy="449.5" r="1.0" fill="#fff" opacity="0.31"></circle><circle cx="787.6" cy="314.1" r="0.7" fill="#fff" opacity="0.61"></circle><circle cx="1113.9" cy="422.7" r="0.9" fill="#fff" opacity="0.55"></circle><circle cx="852.1" cy="345.4" r="0.6" fill="#fff" opacity="0.66"></circle><circle cx="810.6" cy="526.8" r="0.6" fill="#fff" opacity="0.56"></circle><circle cx="944.2" cy="328.4" r="1.1" fill="#fff" opacity="0.26"></circle><circle cx="811.6" cy="572.8" r="0.9" fill="#fff" opacity="0.29"></circle><circle cx="1256.2" cy="588.0" r="0.6" fill="#fff" opacity="0.44"></circle><circle cx="847.2" cy="284.3" r="0.9" fill="#fff" opacity="0.32"></circle><circle cx="1116.9" cy="159.3" r="0.6" fill="#fff" opacity="0.62"></circle><circle cx="974.6" cy="335.2" r="0.9" fill="#fff" opacity="0.46"></circle><circle cx="967.0" cy="149.3" r="1.0" fill="#fff" opacity="0.69"></circle><circle cx="1251.0" cy="452.4" r="0.7" fill="#fff" opacity="0.41"></circle><circle cx="1113.7" cy="457.3" r="0.6" fill="#fff" opacity="0.36"></circle><circle cx="956.8" cy="379.5" r="1.1" fill="#fff" opacity="0.48"></circle><circle cx="795.9" cy="528.5" r="0.8" fill="#fff" opacity="0.48"></circle><circle cx="889.0" cy="339.3" r="0.8" fill="#fff" opacity="0.60"></circle><circle cx="831.7" cy="398.0" r="0.6" fill="#fff" opacity="0.56"></circle><circle cx="800.1" cy="267.1" r="0.7" fill="#fff" opacity="0.54"></circle><circle cx="807.4" cy="354.6" r="0.6" fill="#fff" opacity="0.38"></circle><circle cx="1011.0" cy="593.7" r="0.8" fill="#fff" opacity="0.68"></circle><circle cx="862.8" cy="577.2" r="0.8" fill="#fff" opacity="0.34"></circle><circle cx="1141.7" cy="571.4" r="0.5" fill="#fff" opacity="0.37"></circle><circle cx="1152.3" cy="298.3" r="0.7" fill="#fff" opacity="0.25"></circle><circle cx="801.6" cy="431.1" r="1.2" fill="#fff" opacity="0.70"></circle><circle cx="1024.1" cy="146.1" r="0.7" fill="#fff" opacity="0.60"></circle><circle cx="1181.7" cy="440.9" r="0.7" fill="#fff" opacity="0.49"></circle><circle cx="1011.5" cy="434.9" r="0.7" fill="#fff" opacity="0.68"></circle><circle cx="1211.7" cy="212.3" r="0.7" fill="#fff" opacity="0.64"></circle><circle cx="916.0" cy="586.6" r="0.9" fill="#fff" opacity="0.56"></circle><circle cx="1120.7" cy="237.2" r="0.7" fill="#fff" opacity="0.36"></circle><circle cx="1110.4" cy="467.0" r="0.6" fill="#fff" opacity="0.65"></circle><circle cx="984.2" cy="250.2" r="0.8" fill="#fff" opacity="0.69"></circle><circle cx="1051.2" cy="433.8" r="1.1" fill="#fff" opacity="0.68"></circle><circle cx="1147.4" cy="334.7" r="0.9" fill="#fff" opacity="0.66"></circle><circle cx="1161.2" cy="412.5" r="0.7" fill="#fff" opacity="0.42"></circle><circle cx="1135.6" cy="404.4" r="0.5" fill="#fff" opacity="0.57"></circle><circle cx="1216.2" cy="516.7" r="1.1" fill="#fff" opacity="0.66"></circle><circle cx="1039.2" cy="512.5" r="0.8" fill="#fff" opacity="0.29"></circle><circle cx="951.9" cy="284.1" r="1.2" fill="#fff" opacity="0.56"></circle>
<rect x="-55" y="-27" width="135" height="54" fill="#000" opacity="0.85" filter="url(#fblur)" transform="translate(926.1 182.2) rotate(9.2)"></rect><use href="#screw" transform="translate(931.1 174.2) rotate(9.2)"></use>
<rect x="-55" y="-27" width="135" height="54" fill="#000" opacity="0.85" filter="url(#fblur)" transform="translate(859.4 312.7) rotate(-11.2)"></rect><use href="#screw" transform="translate(868.4 322.7) rotate(-11.2)"></use>
<rect x="-55" y="-27" width="135" height="54" fill="#000" opacity="0.85" filter="url(#fblur)" transform="translate(1116.75 228.4) rotate(141.4)"></rect><use href="#screw" transform="translate(1130.75 233.4) rotate(141.4)"></use>
<rect x="-55" y="-27" width="135" height="54" fill="#000" opacity="0.85" filter="url(#fblur)" transform="translate(1170.15 367.55) rotate(180)"></rect><use href="#screw" transform="translate(1173.15 378.55) rotate(180)"></use>
<rect x="-55" y="-27" width="135" height="54" fill="#000" opacity="0.85" filter="url(#fblur)" transform="translate(903.85 454.4) rotate(-32.8)"></rect><use href="#screw" transform="translate(913.85 463.4) rotate(-32.8)"></use>
<rect x="-55" y="-27" width="135" height="54" fill="#000" opacity="0.85" filter="url(#fblur)" transform="translate(1100.0 551.75) rotate(-10)"></rect><use href="#screw" transform="translate(1105 562.75) rotate(-10)"></use>
<rect x="955" y="169.700" width="23.500" height="22.500" fill="#1010f0"></rect>
<path d="M968.7,185.3h1.300v1.300h-1.300zM972.5,189.5h1.300v1.300h-1.300zM971.3,189.1h1.300v1.300h-1.300zM955.6,179.5h1.300v1.300h-1.300zM975.8,183.3h1.300v1.300h-1.300zM974.8,172.1h1.300v1.300h-1.300zM965.3,174.9h1.300v1.300h-1.300zM967.0,181.8h1.300v1.300h-1.300zM955.3,174.3h1.300v1.300h-1.300zM961.1,188.9h1.300v1.300h-1.300zM971.8,173.1h1.300v1.300h-1.300zM972.5,172.6h1.300v1.300h-1.300zM968.6,172.4h1.300v1.300h-1.300zM955.0,188.0h1.300v1.300h-1.300zM959.6,174.2h1.300v1.300h-1.300zM976.6,188.0h1.300v1.300h-1.300zM961.4,189.9h1.300v1.300h-1.300zM966.9,183.9h1.300v1.300h-1.300zM959.5,189.5h1.300v1.300h-1.300zM970.2,190.0h1.300v1.300h-1.300zM974.7,176.0h1.300v1.300h-1.300zM962.9,173.2h1.300v1.300h-1.300zM958.2,171.1h1.300v1.300h-1.300zM961.6,182.4h1.300v1.300h-1.300zM955.1,183.9h1.300v1.300h-1.300zM962.4,176.2h1.300v1.300h-1.300zM973.0,179.8h1.300v1.300h-1.300zM961.9,179.8h1.300v1.300h-1.300zM970.5,170.9h1.300v1.300h-1.300zM976.5,170.2h1.300v1.300h-1.300zM971.5,187.4h1.300v1.300h-1.300zM955.4,186.2h1.300v1.300h-1.300zM963.1,181.8h1.300v1.300h-1.300zM955.2,170.7h1.300v1.300h-1.300zM959.0,189.8h1.300v1.300h-1.300zM959.3,185.6h1.300v1.300h-1.300zM975.5,189.5h1.300v1.300h-1.300zM962.6,177.2h1.300v1.300h-1.300zM966.5,186.0h1.300v1.300h-1.300zM957.4,185.4h1.300v1.300h-1.300zM972.5,187.8h1.300v1.300h-1.300zM955.8,189.6h1.300v1.300h-1.300zM957.0,176.9h1.300v1.300h-1.300zM968.4,189.0h1.300v1.300h-1.300zM962.5,189.1h1.300v1.300h-1.300z" fill="#6a7aff"></path>
<path d="M782.400,374.500 h480" stroke="#1a1a70" stroke-width="0.800" opacity="0.45"></path><path d="M1022.500,134.700 v478.800" stroke="#16163a" stroke-width="0.800" opacity="0.5"></path>
<path d="M1018,374.500 h9 M1022.500,370 v9" stroke="#2020c0" stroke-width="1.400"></path>
<path d="M480,92 h18.500 l-18.500,17.500 z" fill="#4a55e8"></path>
</svg>
<div class="a" style="left:1566px;top:90px;width:34px;height:568px;background:#f7f7f7;border-left:1px solid #e0e0e0;box-sizing:border-box"></div>
<svg class="a" style="left:1566px;top:90px" width="34" height="270" viewBox="1566 90 34 270">
<rect x="1569.300" y="93.400" width="25" height="25" fill="#d9e5f9" stroke="#c2d0ee" stroke-width="0.600"></rect>
<rect x="1572.500" y="109.500" width="6.500" height="6.500" fill="#d4dcf6" stroke="#9aa8e0" stroke-width="0.700"></rect>
<path d="M1583.0,107.1 l6.5,6.5" stroke="#8c8c8c" stroke-width="4.400" stroke-linecap="round"></path><path d="M1583.5,107.6 l5.9,5.9" stroke="#f2f2f2" stroke-width="2.400" stroke-linecap="round"></path><circle cx="1578.7" cy="102.8" r="6.8" fill="#e2e2e2" stroke="#7a7a7a" stroke-width="1"></circle><circle cx="1578.7" cy="102.8" r="4.5" fill="#f0f1f4" stroke="#8a8a8a" stroke-width="0.900"></circle>
<rect x="1570.300" y="126.500" width="23" height="23.500" fill="#e6e8f6" stroke="#3a3f9c" stroke-width="1.300"></rect><rect x="1573" y="129.300" width="17.500" height="18" rx="2.500" fill="none" stroke="#6a70c0" stroke-width="1"></rect>
<path d="M1584.2,141.8 l6.5,6.5" stroke="#8c8c8c" stroke-width="4.400" stroke-linecap="round"></path><path d="M1584.7,142.3 l5.9,5.9" stroke="#f2f2f2" stroke-width="2.400" stroke-linecap="round"></path><circle cx="1580.2" cy="137.8" r="6.4" fill="#e2e2e2" stroke="#7a7a7a" stroke-width="1"></circle><circle cx="1580.2" cy="137.8" r="4.1" fill="#f0f1f4" stroke="#8a8a8a" stroke-width="0.900"></circle><path d="M1577.400,137.800 h5.600 M1580.200,135 v5.600" stroke="#666" stroke-width="0.900"></path>
<rect x="1570.300" y="159.800" width="22" height="21.500" fill="#f3eded" stroke="#a82626" stroke-width="1.300"></rect>
<path d="M1583.6,173.8 l6.5,6.5" stroke="#8c8c8c" stroke-width="4.400" stroke-linecap="round"></path><path d="M1584.1,174.3 l5.9,5.9" stroke="#f2f2f2" stroke-width="2.400" stroke-linecap="round"></path><circle cx="1579.4" cy="169.6" r="6.6" fill="#e2e2e2" stroke="#7a7a7a" stroke-width="1"></circle><circle cx="1579.4" cy="169.6" r="4.3" fill="#f0f1f4" stroke="#8a8a8a" stroke-width="0.900"></circle><path d="M1576.400,169.600 h6" stroke="#444" stroke-width="1.800"></path>
<path d="M1568,190.500 h27" stroke="#d4d4d4" stroke-width="1"></path>
<path d="M1577.500,197 h7 v5.500 h6 v7 h-6 v5.500 h-7 v-5.500 h-6 v-7 h6z" fill="#3a68cc" stroke="#2a4aa0" stroke-width="0.700"></path>
<path d="M1584.6,212.1 l5.5,5.5" stroke="#8c8c8c" stroke-width="4.400" stroke-linecap="round"></path><path d="M1585.1,212.6 l4.9,4.9" stroke="#f2f2f2" stroke-width="2.400" stroke-linecap="round"></path><circle cx="1581" cy="208.5" r="5.8" fill="#e2e2e2" stroke="#7a7a7a" stroke-width="1"></circle><circle cx="1581" cy="208.5" r="3.5" fill="#4a86ee" stroke="#8a8a8a" stroke-width="0.900"></circle>
<path d="M1571,238.500 h6 M1585,238.500 h6" stroke="#3a68cc" stroke-width="6.500"></path>
<path d="M1585.0,245.0 l5.5,5.5" stroke="#8c8c8c" stroke-width="4.400" stroke-linecap="round"></path><path d="M1585.5,245.5 l4.9,4.9" stroke="#f2f2f2" stroke-width="2.400" stroke-linecap="round"></path><circle cx="1581" cy="241" r="6.4" fill="#e2e2e2" stroke="#7a7a7a" stroke-width="1"></circle><circle cx="1581" cy="241" r="4.1" fill="#4a86ee" stroke="#8a8a8a" stroke-width="0.900"></circle>
<rect x="1570.500" y="264.500" width="21" height="21" fill="#e8e8f4" stroke="#3a3f9c" stroke-width="1.300"></rect><rect x="1573" y="267" width="16" height="16" fill="none" stroke="#8a90d0" stroke-width="0.800"></rect>
<path d="M1584.9,278.4 l6.5,6.5" stroke="#8c8c8c" stroke-width="4.400" stroke-linecap="round"></path><path d="M1585.4,278.9 l5.9,5.9" stroke="#f2f2f2" stroke-width="2.400" stroke-linecap="round"></path><circle cx="1581" cy="274.5" r="6.2" fill="#e2e2e2" stroke="#7a7a7a" stroke-width="1"></circle><circle cx="1581" cy="274.5" r="3.9" fill="#f0f1f4" stroke="#8a8a8a" stroke-width="0.900"></circle><circle cx="1591.500" cy="264.500" r="2.500" fill="#111"></circle><circle cx="1570.500" cy="285.500" r="2.500" fill="#111"></circle>
<path d="M1568,292.500 h27" stroke="#d4d4d4" stroke-width="1"></path>
<path d="M1577,303.500 q0,-5 4.500,-5 q4.500,0 4.500,4 q0,3 -4,4.500 v3" fill="none" stroke="#d2d2d2" stroke-width="2.800"></path><path d="M1568.500,311.500 l6.500,-4.500 v2.700 h12 v-2.700 l6.500,4.500 l-6.500,4.500 v-2.700 h-12 v2.700z" fill="#3a68cc" stroke="#2a4aa0" stroke-width="0.500"></path>
<rect x="1568.500" y="316.800" width="25.500" height="6" fill="#f2d454" stroke="#b89828" stroke-width="0.600"></rect><path d="M1572,316.800 v3 M1576,316.800 v3 M1580,316.800 v4 M1584,316.800 v3 M1588,316.800 v3 M1592,316.800 v3" stroke="#806010" stroke-width="0.600"></path>
<rect x="1570.300" y="331.500" width="22" height="22" fill="#f4f4f4" stroke="#333" stroke-width="1.200"></rect><path d="M1574.700,331.500 v22 M1579.100,331.500 v22 M1583.500,331.500 v22 M1587.900,331.500 v22 M1570.300,335.900 h22 M1570.300,340.300 h22 M1570.300,344.700 h22 M1570.300,349.100 h22" stroke="#444" stroke-width="1"></path>
</svg>
<div class="a" style="left:480px;top:657px;width:1120px;height:22px;background:#f5f5f5"></div>
<div class="a" style="left:480px;top:678px;width:1086px;height:2px;background:#fbfbfb"></div>
<span class="t" style="left: 481.5px; top: 662.4px; font-size: 11px; line-height: 13px; transform-origin: 0px 50%; transform: scaleX(0.844);">Messung L:0.158  X:-0.045  Y:0.151</span>
<div class="sep" style="left:1091px;top:660px;height:16px;background:#b8b8b8"></div>
<span class="t" style="left: 1096.5px; top: 662.4px; font-size: 11px; line-height: 13px; transform-origin: 0px 50%; transform: scaleX(0.842);">Achsen: X: 105.228  Y: -48.336  Z: 4.928  Zdf: 0.000</span>
<div class="sep" style="left:1314px;top:660px;height:16px;background:#b8b8b8"></div><div class="sep" style="left:1317px;top:660px;height:16px;background:#b8b8b8"></div>
<span class="t" style="left: 1321.5px; top: 662.4px; font-size: 11px; line-height: 13px; transform-origin: 0px 50%; transform: scaleX(0.852);">Umhüllungsbox    W:1.624  H:1.606  X:-4.056  Y:13.952</span>
<div class="a" style="left:0;top:880px;width:1600px;height:20px;background:#f0f0f0"></div>
<div class="a" style="left:0;top:879.500px;width:1600px;height:1.500px;background:#fbfbfb"></div>
<div class="sep" style="left:1075.5px;top:882px;height:16px;background:#b8b8b8"></div>
<span class="t" style="left: 1080.5px; top: 884.4px; font-size: 11px; line-height: 13px; transform-origin: 0px 50%; transform: scaleX(0.861);">Default (VIIZB75-2119)</span>
<div class="sep" style="left:1181.5px;top:882px;height:16px;background:#b8b8b8"></div>
<span class="t" style="left: 1187px; top: 884.4px; font-size: 11px; line-height: 13px; transform-origin: 0px 50%; transform: scaleX(0.743);">SC_V5_F1</span>
<div class="sep" style="left:1231.5px;top:882px;height:16px;background:#b8b8b8"></div>
<span class="t" style="left: 1236.7px; top: 884.4px; font-size: 11px; line-height: 13px; transform-origin: 0px 50%; transform: scaleX(0.863);">Fibre20-ZM-EP (F75)</span>
<div class="sep" style="left:1331.0px;top:882px;height:16px;background:#b8b8b8"></div>
<span class="t" style="left: 1336px; top: 884.4px; font-size: 11px; line-height: 13px; transform-origin: 0px 50%; transform: scaleX(0.829);">Run: 00:00:09.37</span>
<div class="sep" style="left:1410.0px;top:882px;height:16px;background:#b8b8b8"></div>
<span class="t" style="left: 1415px; top: 884.4px; font-size: 11px; line-height: 13px; transform-origin: 0px 50%; transform: scaleX(0.834);">Timer: 00:00:04.41</span>
<div class="sep" style="left:1496.0px;top:882px;height:16px;background:#b8b8b8"></div>
<span class="t" style="left: 1501.5px; top: 884.4px; font-size: 11px; line-height: 13px; transform-origin: 0px 50%; transform: scaleX(0.846);">V3.2 Build:520.01</span>
<div class="sep" style="left:1579px;top:882px;height:16px;background:#b8b8b8"></div>
<div class="a" style="left:480px;top:680px;width:1086px;height:198px;background:#f0f0f0"></div>
<div class="gb" style="left:481px;top:687px;width:1072px;height:189px"></div>
<span class="t" style="left: 483.5px; top: 682.3px; background: rgb(240, 240, 240); padding: 0px 2px; transform-origin: 2px 50%; transform: scaleX(0.919);">Grafik (mm)</span>
<div class="gb" style="left:484px;top:701px;width:200px;height:125px"></div>
<div class="a" style="left:486px;top:694px;width:100px;height:14px;background:#f0f0f0"></div>
<div class="cb" style="left:488px;top:696px"></div><svg class="a" style="left:488px;top:696px" width="11" height="11"><path d="M2.300,5.500 l2.300,2.500 l4.200,-5.200" fill="none" stroke="#111" stroke-width="1.300"></path></svg>
<div class="btn" style="left:502px;top:696px;width:15px;height:11px"></div><span class="t" style="left:505.500px;top:693.9px;font-size:8px;color:#555;letter-spacing:0.5px">...</span>
<span class="t" style="left: 519.5px; top: 695.8px; transform-origin: 0px 50%; transform: scaleX(0.853);">Laser Parameter</span>
<span class="t" style="left: 519.5px; top: 710.8px; transform-origin: 0px 50%; transform: scaleX(0.911);">Leistung:</span>
<div class="inp" style="left:592px;top:708.7px;width:41px;height:15.700px"></div>
<span class="t" style="left:594.500px;top:710.8px;letter-spacing:-0.5px">50.00</span>
<svg class="a" style="left:633px;top:708.7px" width="11" height="15.5" viewBox="0 0 11 15.5"><rect width="11" height="15.5" fill="#dde3f0"></rect><path d="M5.5,1.2 l4.400,5 h-8.800z M5.5,14.3 l4.400,-5 h-8.800z" fill="#1414b4"></path></svg>
<span class="t" style="left:647px;top:710.8px;letter-spacing:-0.4px">%</span>
<span class="t" style="left: 502.5px; top: 727.5px; transform-origin: 0px 50%; transform: scaleX(0.946);">Geschwindigkeit:</span>
<div class="inp" style="left:592px;top:725.4px;width:41px;height:15.700px"></div>
<span class="t" style="left:594.500px;top:727.5px;letter-spacing:-0.5px">500.00</span>
<svg class="a" style="left:633px;top:725.4px" width="11" height="15.5" viewBox="0 0 11 15.5"><rect width="11" height="15.5" fill="#dde3f0"></rect><path d="M5.5,1.2 l4.400,5 h-8.800z M5.5,14.3 l4.400,-5 h-8.800z" fill="#1414b4"></path></svg>
<span class="t" style="left:647px;top:727.5px;letter-spacing:-0.4px">mm/s</span>
<span class="t" style="left: 517.7px; top: 744.2px; transform-origin: 0px 50%; transform: scaleX(0.917);">Frequenz:</span>
<div class="inp" style="left:592px;top:742.1px;width:41px;height:15.700px"></div>
<span class="t" style="left:594.500px;top:744.2px;letter-spacing:-0.5px">20'000</span>
<svg class="a" style="left:633px;top:742.1px" width="11" height="15.5" viewBox="0 0 11 15.5"><rect width="11" height="15.5" fill="#dde3f0"></rect><path d="M5.5,1.2 l4.400,5 h-8.800z M5.5,14.3 l4.400,-5 h-8.800z" fill="#1414b4"></path></svg>
<span class="t" style="left:647px;top:744.2px;letter-spacing:-0.4px">Hz</span>
<span class="t" style="left: 516.7px; top: 760.9px; transform-origin: 0px 50%; transform: scaleX(0.921);">Pulsbreite:</span>
<div class="inp" style="left:592px;top:758.8px;width:41px;height:15.700px"></div>
<span class="t" style="left:594.500px;top:760.9px;letter-spacing:-0.5px">0.220</span>
<svg class="a" style="left:633px;top:758.8px" width="11" height="15.5" viewBox="0 0 11 15.5"><rect width="11" height="15.5" fill="#dde3f0"></rect><path d="M5.5,1.2 l4.400,5 h-8.800z M5.5,14.3 l4.400,-5 h-8.800z" fill="#1414b4"></path></svg>
<span class="t" style="left:647px;top:760.9px;letter-spacing:-0.4px">µs</span>
<span class="t" style="left: 512px; top: 777.6px; transform-origin: 0px 50%; transform: scaleX(0.917);">Startverzög.:</span>
<div class="inp" style="left:592px;top:775.5px;width:41px;height:15.700px"></div>
<span class="t" style="left:594.500px;top:777.6px;letter-spacing:-0.5px">150</span>
<svg class="a" style="left:633px;top:775.5px" width="11" height="15.5" viewBox="0 0 11 15.5"><rect width="11" height="15.5" fill="#dde3f0"></rect><path d="M5.5,1.2 l4.400,5 h-8.800z M5.5,14.3 l4.400,-5 h-8.800z" fill="#1414b4"></path></svg>
<span class="t" style="left:647px;top:777.6px;letter-spacing:-0.4px">µs</span>
<span class="t" style="left: 512.6px; top: 794.3px; transform-origin: 0px 50%; transform: scaleX(0.915);">Stopverzög.:</span>
<div class="inp" style="left:592px;top:792.2px;width:41px;height:15.700px"></div>
<span class="t" style="left:594.500px;top:794.3px;letter-spacing:-0.5px">150</span>
<svg class="a" style="left:633px;top:792.2px" width="11" height="15.5" viewBox="0 0 11 15.5"><rect width="11" height="15.5" fill="#dde3f0"></rect><path d="M5.5,1.2 l4.400,5 h-8.800z M5.5,14.3 l4.400,-5 h-8.800z" fill="#1414b4"></path></svg>
<span class="t" style="left:647px;top:794.3px;letter-spacing:-0.4px">µs</span>
<span class="t" style="left: 505.4px; top: 811px; transform-origin: 0px 50%; transform: scaleX(0.922);">Defokussierung:</span>
<div class="inp" style="left:592px;top:808.9px;width:41px;height:15.700px"></div>
<span class="t" style="left:594.500px;top:811.0px;letter-spacing:-0.5px">0.00</span>
<svg class="a" style="left:633px;top:808.9px" width="11" height="15.5" viewBox="0 0 11 15.5"><rect width="11" height="15.5" fill="#dde3f0"></rect><path d="M5.5,1.2 l4.400,5 h-8.800z M5.5,14.3 l4.400,-5 h-8.800z" fill="#1414b4"></path></svg>
<span class="t" style="left:647px;top:811.0px;letter-spacing:-0.4px">mm</span>
<div class="gb" style="left:688px;top:701px;width:861px;height:53px"></div>
<div class="a" style="left:693px;top:694px;width:66px;height:14px;background:#f0f0f0"></div>
<div class="cb" style="left:695px;top:696px"></div>
<span class="t" style="left: 711.5px; top: 695.8px; transform-origin: 0px 50%; transform: scaleX(0.861);">Script-Datei</span>
<div class="btn" style="left:723px;top:709.500px;width:18px;height:14px"></div><span class="t" style="left:728px;top:708.4px;font-size:8px;color:#444;letter-spacing:0.5px">...</span>
<div class="inp" style="left:742.500px;top:709px;width:803px;height:15.500px"></div>
<div class="btn" style="left:743.500px;top:730px;width:147px;height:16.500px"></div><span class="t" style="left: 756.5px; top: 732.9px; transform-origin: 0px 50%; transform: scaleX(0.874);">Vom Script-Editor übernehmen</span>
<div class="gb" style="left:688px;top:787px;width:408px;height:40.500px"></div>
<div class="a" style="left:693px;top:780px;width:82px;height:14px;background:#f0f0f0"></div>
<div class="cb" style="left:695px;top:782px;border-color:#555"></div>
<span class="t g" style="left: 711.5px; top: 781.8px; color: rgb(166, 166, 166); transform-origin: 0px 50%; transform: scaleX(0.878);">Externe Achsen</span>
<span class="t" style="left:718.5px;top:795.9px;color:#8c8c8c">X:</span>
<div class="inpd" style="left:692.5px;top:808.700px;width:53.5px;height:15.500px"></div>
<span class="t" style="left:695.0px;top:810.9px;color:#a0a0a0;letter-spacing:-0.5px">0.000</span>
<svg class="a" style="left:746.4px;top:808.7px" width="11" height="15.5" viewBox="0 0 11 15.5"><rect width="11" height="15.5" fill="#dde3f0"></rect><path d="M5.5,1.2 l4.400,5 h-8.800z M5.5,14.3 l4.400,-5 h-8.800z" fill="#1414b4"></path></svg>
<span class="t" style="left:795.0px;top:795.9px;color:#8c8c8c">Y:</span>
<div class="inpd" style="left:768.8px;top:808.700px;width:53px;height:15.500px"></div>
<span class="t" style="left:771.3px;top:810.9px;color:#a0a0a0;letter-spacing:-0.5px">0.000</span>
<svg class="a" style="left:822.8px;top:808.7px" width="11" height="15.5" viewBox="0 0 11 15.5"><rect width="11" height="15.5" fill="#dde3f0"></rect><path d="M5.5,1.2 l4.400,5 h-8.800z M5.5,14.3 l4.400,-5 h-8.800z" fill="#1414b4"></path></svg>
<span class="t" style="left:872.8px;top:795.9px;color:#8c8c8c">Z:</span>
<div class="inpd" style="left:846.4px;top:808.700px;width:52.5px;height:15.500px"></div>
<span class="t" style="left:848.9px;top:810.9px;color:#a0a0a0;letter-spacing:-0.5px">0.000</span>
<svg class="a" style="left:900.2px;top:808.7px" width="11" height="15.5" viewBox="0 0 11 15.5"><rect width="11" height="15.5" fill="#dde3f0"></rect><path d="M5.5,1.2 l4.400,5 h-8.800z M5.5,14.3 l4.400,-5 h-8.800z" fill="#1414b4"></path></svg>
<span class="t" style="left:949.9px;top:795.9px;color:#8c8c8c">4:</span>
<div class="inpd" style="left:924px;top:808.700px;width:52.5px;height:15.500px"></div>
<span class="t" style="left:926.5px;top:810.9px;color:#a0a0a0;letter-spacing:-0.5px">0.000</span>
<svg class="a" style="left:977.4px;top:808.7px" width="11" height="15.5" viewBox="0 0 11 15.5"><rect width="11" height="15.5" fill="#dde3f0"></rect><path d="M5.5,1.2 l4.400,5 h-8.800z M5.5,14.3 l4.400,-5 h-8.800z" fill="#1414b4"></path></svg>
<svg class="a" style="left:1016px;top:792px" width="57" height="33" viewBox="1016 792 57 33"><rect x="1016.800" y="792.500" width="55.200" height="31.500" fill="#cbcbcb"></rect><text x="1044.400" y="800" font-family="Liberation Serif" font-size="5.500" font-weight="bold" text-anchor="middle" fill="#555">X, Y, Z, 4</text><path d="M1035.500,805 h18 l2,15 h-22z M1038,807 h13 l1.200,11 h-15.400z M1044.500,807 v11 M1037,812.500 h15" fill="none" stroke="#8a8a8a" stroke-width="0.700"></path></svg>
<div class="gb" style="left:484px;top:835px;width:87px;height:40px"></div>
<span class="t" style="left: 487.5px; top: 829.4px; background: rgb(240, 240, 240); padding: 0px 2px; transform-origin: 2px 50%; transform: scaleX(0.944);">Beschriftung</span>
<span class="t" style="left: 511.7px; top: 844.1px; transform-origin: 0px 50%; transform: scaleX(0.917);">Anzahl:</span>
<div class="inp" style="left:493.500px;top:856.300px;width:54.500px;height:16px"></div><span class="t" style="left:496.500px;top:858.7px">1</span><svg class="a" style="left:548.3px;top:856.3px" width="11" height="16" viewBox="0 0 11 16"><rect width="11" height="16" fill="#dde3f0"></rect><path d="M5.5,1.2 l4.400,5 h-8.800z M5.5,14.8 l4.400,-5 h-8.800z" fill="#1414b4"></path></svg>
<div class="gb" style="left:574.500px;top:835px;width:172px;height:40px"></div>
<span class="t" style="left: 580px; top: 829.4px; background: rgb(240, 240, 240); padding: 0px 2px; transform-origin: 2px 50%; transform: scaleX(0.95);">Verschieben</span>
<span class="t" style="left:614.2px;top:844.1px">X:</span>
<div class="inp" style="left:586.2px;top:856.300px;width:54px;height:16px"></div><span class="t" style="left:588.7px;top:858.7px;letter-spacing:-0.5px">0.000</span><svg class="a" style="left:640.8px;top:856.3px" width="11" height="16" viewBox="0 0 11 16"><rect width="11" height="16" fill="#dde3f0"></rect><path d="M5.5,1.2 l4.400,5 h-8.800z M5.5,14.8 l4.400,-5 h-8.800z" fill="#1414b4"></path></svg>
<span class="t" style="left:697.5px;top:844.1px">Y:</span>
<div class="inp" style="left:669.3px;top:856.300px;width:54px;height:16px"></div><span class="t" style="left:671.8px;top:858.7px;letter-spacing:-0.5px">0.000</span><svg class="a" style="left:724.2px;top:856.3px" width="11" height="16" viewBox="0 0 11 16"><rect width="11" height="16" fill="#dde3f0"></rect><path d="M5.5,1.2 l4.400,5 h-8.800z M5.5,14.8 l4.400,-5 h-8.800z" fill="#1414b4"></path></svg>
<div class="gb" style="left:749px;top:835px;width:344.500px;height:40px"></div>
<span class="t" style="left: 756px; top: 829.4px; background: rgb(240, 240, 240); padding: 0px 2px; transform-origin: 2px 50%; transform: scaleX(0.97);">Größe</span>
<span class="t" style="left: 779px; top: 844.1px; transform-origin: 0px 50%; transform: scaleX(0.929);">X-Mitte:</span>
<div class="inp" style="left:762.5px;top:856.300px;width:54.5px;height:16px"></div><span class="t" style="left:765.0px;top:858.7px;letter-spacing:-0.5px">0.000</span><svg class="a" style="left:817.6px;top:856.3px" width="11" height="16" viewBox="0 0 11 16"><rect width="11" height="16" fill="#dde3f0"></rect><path d="M5.5,1.2 l4.400,5 h-8.800z M5.5,14.8 l4.400,-5 h-8.800z" fill="#1414b4"></path></svg>
<span class="t" style="left: 863px; top: 844.1px; transform-origin: 0px 50%; transform: scaleX(0.954);">Y-Mitte:</span>
<div class="inp" style="left:846.2px;top:856.300px;width:54px;height:16px"></div><span class="t" style="left:848.7px;top:858.7px;letter-spacing:-0.5px">0.000</span><svg class="a" style="left:901px;top:856.3px" width="11" height="16" viewBox="0 0 11 16"><rect width="11" height="16" fill="#dde3f0"></rect><path d="M5.5,1.2 l4.400,5 h-8.800z M5.5,14.8 l4.400,-5 h-8.800z" fill="#1414b4"></path></svg>
<span class="t" style="left: 946.2px; top: 844.1px; transform-origin: 0px 50%; transform: scaleX(0.936);">X-Größe:</span>
<div class="inp" style="left:932.4px;top:856.300px;width:54.5px;height:16px"></div><span class="t" style="left:934.9px;top:858.7px;letter-spacing:-0.5px">1.000000</span><svg class="a" style="left:987.5px;top:856.3px" width="11" height="16" viewBox="0 0 11 16"><rect width="11" height="16" fill="#dde3f0"></rect><path d="M5.5,1.2 l4.400,5 h-8.800z M5.5,14.8 l4.400,-5 h-8.800z" fill="#1414b4"></path></svg>
<span class="t" style="left: 1029.5px; top: 844.1px; transform-origin: 0px 50%; transform: scaleX(0.958);">Y-Größe:</span>
<div class="inp" style="left:1016.3px;top:856.300px;width:54.2px;height:16px"></div><span class="t" style="left:1018.8px;top:858.7px;letter-spacing:-0.5px">1.000000</span><svg class="a" style="left:1071px;top:856.3px" width="11" height="16" viewBox="0 0 11 16"><rect width="11" height="16" fill="#dde3f0"></rect><path d="M5.5,1.2 l4.400,5 h-8.800z M5.5,14.8 l4.400,-5 h-8.800z" fill="#1414b4"></path></svg>
<div class="a" style="left:1553.500px;top:682px;width:12.500px;height:196px;background:#f4f4f4"></div>
<div class="a" style="left:1554.500px;top:696.500px;width:10.500px;height:132px;background:#cdcdcd"></div>
<svg class="a" style="left:1553px;top:684px" width="13" height="192" viewBox="0 0 13 192"><path d="M3,7.500 l3.500,-3.500 l3.500,3.500 M3,184 l3.500,3.500 l3.500,-3.500" fill="none" stroke="#444" stroke-width="1.400"></path></svg>
<div class="a" style="left:1566px;top:658px;width:34px;height:221px;background:#f6f6f6"></div>
<!-- ===== dialog ===== -->
<div class="a" id="dlg" style="left:4px;top:413px;width:544px;height:234px;background:#f0f0f0;border:1px solid #9a9a9a;box-sizing:border-box;box-shadow:0 3px 11px rgba(0,0,0,.32)">
<div class="a" style="left:0;top:0;width:542px;height:25px;background:#fff"></div>
<svg class="a" style="left:5.900px;top:4.100px" width="14" height="14" viewBox="0 0 14 14"><rect width="13.400" height="13.600" fill="#050505"></rect><path d="M1.300,3.100 h11.400 v2.300 h-0.400 v5.100 h-3.100 v-5.100 h-1.600 v1.200 h-2.500 v1.300 h2.500 v2.600 h-5.500 q-0.800,0 -0.800,-0.800z" fill="#fff"></path></svg>
<svg class="a" style="left:525px;top:6px" width="11" height="11" viewBox="0 0 11 11"><path d="M1,1 l8.500,8.500 M9.500,1 l-8.500,8.500" stroke="#8a8a8a" stroke-width="1"></path></svg>
<div class="gb" style="left:5.5px;top:36px;width:230.5px;height:189px"></div>
<span class="t" style="left: 10px; top: 31.2px; background: rgb(240, 240, 240); padding: 0px 2px; transform-origin: 2px 50%; transform: scaleX(0.889);">Produktion</span>
<div class="btn" style="left:12.5px;top:50px;width:111.0px;height:35.8px;"></div>
<span class="t" style="left: 47.2px; top: 62.9px; transform-origin: 0px 50%; transform: scaleX(0.848);">Hole Bilder</span>
<div class="btn" style="left:131px;top:50px;width:98.0px;height:35.8px;"></div>
<span class="t" style="left: 144.2px; top: 62.9px; transform-origin: 0px 50%; transform: scaleX(0.906);">Finde das Pattern</span>
<div class="btn" style="left:12.5px;top:89px;width:111.0px;height:35.0px;"></div>
<span class="t" style="left: 38.5px; top: 101.5px; transform-origin: 0px 50%; transform: scaleX(0.892);">Material Laden</span>
<div class="btn" style="left:131px;top:89px;width:98.0px;height:35.0px;"></div>
<span class="t" style="left: 161.5px; top: 101.5px; transform-origin: 0px 50%; transform: scaleX(0.887);">Vorschau</span>
<div class="btn" style="left:12.5px;top:133px;width:123.2px;height:42.0px;"></div>
<span class="t" style="left: 23.6px; top: 149px; transform-origin: 0px 50%; transform: scaleX(0.891);">Hole Bilder und finde Pat.</span>
<div class="btn" style="left:143.4px;top:133px;width:85.6px;height:42.0px;"></div>
<span class="t" style="left: 166.4px; top: 149px; transform-origin: 0px 50%; transform: scaleX(0.888);">Markieren</span>
<div class="btn" style="left:12.5px;top:182.7px;width:116.5px;height:29.8px;"></div>
<span class="t" style="left: 28.2px; top: 192.6px; transform-origin: 0px 50%; transform: scaleX(0.927);">entferne Hintergrund</span>
<div class="btn" style="left:143.4px;top:182.7px;width:79.1px;height:29.8px;"></div>
<span class="t" style="left: 162.9px; top: 192.6px; transform-origin: 0px 50%; transform: scaleX(0.856);">Simulation</span>
<div class="gb" style="left:243.5px;top:36px;width:111.0px;height:72.5px"></div>
<span class="t" style="left: 248px; top: 31.2px; background: rgb(240, 240, 240); padding: 0px 2px; transform-origin: 2px 50%; transform: scaleX(0.859);">Stitch</span>
<div class="rd" style="left:249.4px;top:44.4px"></div>
<span class="t" style="left: 262px; top: 44.6px; transform-origin: 0px 50%; transform: scaleX(0.871);">Gesamt</span>
<div class="rd" style="left:299.4px;top:44.4px"></div>
<span class="t" style="left: 312px; top: 44.6px; transform-origin: 0px 50%; transform: scaleX(0.876);">Lang</span>
<div class="rd" style="left:249.4px;top:57.3px"></div>
<span class="t" style="left: 262px; top: 57.5px; transform-origin: 0px 50%; transform: scaleX(0.856);">Hoch</span>
<div class="rd" style="left:299.4px;top:57.3px"></div>
<div class="a" style="left:301.9px;top:59.8px;width:5px;height:5px;border-radius:50%;background:#222"></div>
<span class="t" style="left: 312px; top: 57.5px; transform-origin: 0px 50%; transform: scaleX(0.961);">4x4</span>
<div class="rd" style="left:299.4px;top:70.3px"></div>
<span class="t" style="left: 312px; top: 70.5px; transform-origin: 0px 50%; transform: scaleX(0.961);">6x6</span>
<div class="rd" style="left:249.4px;top:82.9px"></div>
<span class="t" style="left: 262px; top: 83.1px; transform-origin: 0px 50%; transform: scaleX(0.961);">2x2</span>
<div class="rd" style="left:299.4px;top:82.9px"></div>
<span class="t" style="left: 312px; top: 83.1px; transform-origin: 0px 50%; transform: scaleX(0.961);">1x1</span>
<div class="rd" style="left:249.4px;top:95.5px"></div>
<span class="t" style="left: 262px; top: 95.7px; transform-origin: 0px 50%; transform: scaleX(0.961);">2x1</span>
<div class="rd" style="left:299.4px;top:95.5px"></div>
<span class="t" style="left: 312px; top: 95.7px; transform-origin: 0px 50%; transform: scaleX(0.961);">1x2</span>
<div class="gb" style="left:243.5px;top:118.7px;width:103.5px;height:112.29999999999995px"></div>
<span class="t" style="left: 248px; top: 113.9px; background: rgb(240, 240, 240); padding: 0px 2px; transform-origin: 2px 50%; transform: scaleX(0.911);">Operation</span>
<div class="btn" style="left:250px;top:126.7px;width:91.5px;height:15.8px;border:1.500px solid #0a6ad0;background:#e3effa;"></div>
<span class="t" style="left: 257.2px; top: 129.6px; transform-origin: 0px 50%; transform: scaleX(0.888);">camConf neu laden</span>
<div class="btn" style="left:250px;top:152px;width:91.5px;height:22.0px;"></div>
<span class="t" style="left: 257.5px; top: 158px; transform-origin: 0px 50%; transform: scaleX(0.876);">Setze Basisposition</span>
<div class="btn" style="left:250px;top:177.5px;width:91.5px;height:22.0px;"></div>
<span class="t" style="left: 266px; top: 183.5px; transform-origin: 0px 50%; transform: scaleX(0.892);">Basis anfahren</span>
<div class="btn" style="left:250px;top:202.7px;width:91.5px;height:22.0px;"></div>
<span class="t" style="left: 260.8px; top: 208.7px; transform-origin: 0px 50%; transform: scaleX(0.893);">Material Kopieren</span>
<div class="gb" style="left:362.5px;top:42.7px;width:117.5px;height:62.30000000000001px"></div>
<span class="t" style="left: 366.5px; top: 37.9px; background: rgb(240, 240, 240); padding: 0px 2px; transform-origin: 2px 50%; transform: scaleX(0.918);">Setup</span>
<div class="btn" style="left:368.5px;top:50.8px;width:98.0px;height:22.0px;"></div>
<span class="t" style="left: 386px; top: 56.8px; transform-origin: 0px 50%; transform: scaleX(0.879);">1. Get Mid Point</span>
<div class="btn" style="left:368.5px;top:76.3px;width:98.0px;height:21.7px;"></div>
<span class="t" style="left: 382.2px; top: 82.2px; transform-origin: 0px 50%; transform: scaleX(0.899);">2. Setup Stitching</span>
<div class="gb" style="left:355.5px;top:112px;width:167.0px;height:113px"></div>
<span class="t" style="left: 360px; top: 107.2px; background: rgb(240, 240, 240); padding: 0px 2px; transform-origin: 2px 50%; transform: scaleX(0.831);">Vision</span>
<span class="t" style="left: 366.7px; top: 126.4px; transform-origin: 0px 50%; transform: scaleX(0.899);">max. Stücke</span>
<div class="inp" style="left:461px;top:124.5px;width:51.500px;height:13.500px;border-color:#4a5874"></div>
<span class="t" style="left:465.5px;top:127.0px;letter-spacing:-0.3px">6</span>
<span class="t" style="left: 366.7px; top: 145.7px; transform-origin: 0px 50%; transform: scaleX(0.906);">max. Überlappung</span>
<div class="inp" style="left:461px;top:143.8px;width:51.500px;height:13.500px;border-color:#4a5874"></div>
<span class="t" style="left:465.5px;top:146.2px;letter-spacing:-0.3px">0.4</span>
<span class="t" style="left: 366.7px; top: 165px; transform-origin: 0px 50%; transform: scaleX(0.892);">min. Ähnlichkeit</span>
<div class="inp" style="left:461px;top:163.1px;width:51.500px;height:13.500px;border-color:#4a5874"></div>
<span class="t" style="left:465.5px;top:165.4px;letter-spacing:-0.3px">0.65</span>
<span class="t" style="left: 366.7px; top: 183.5px; transform-origin: 0px 50%; transform: scaleX(0.885);">Belichtungszeit</span>
<div class="inp" style="left:461px;top:181.6px;width:51.500px;height:13.500px;border-color:#4a5874"></div>
<span class="t" style="left:465.5px;top:184.0px;letter-spacing:-0.3px">60000</span>
<div class="cb" style="left:362px;top:208.7px"></div><svg class="a" style="left:362px;top:208.7px" width="11" height="11"><path d="M2.300,5.500 l2.300,2.500 l4.200,-5.200" fill="none" stroke="#111" stroke-width="1.300"></path></svg>
<span class="t" style="left: 375px; top: 209.5px; transform-origin: 0px 50%; transform: scaleX(0.85);">Winkel</span>
<div class="btn" style="left:412px;top:209.3px;width:104.5px;height:15.4px;"></div>
<span class="t" style="left: 435.8px; top: 212px; transform-origin: 0px 50%; transform: scaleX(0.924);">Teach Pattern</span>
</div>

</body></html>
